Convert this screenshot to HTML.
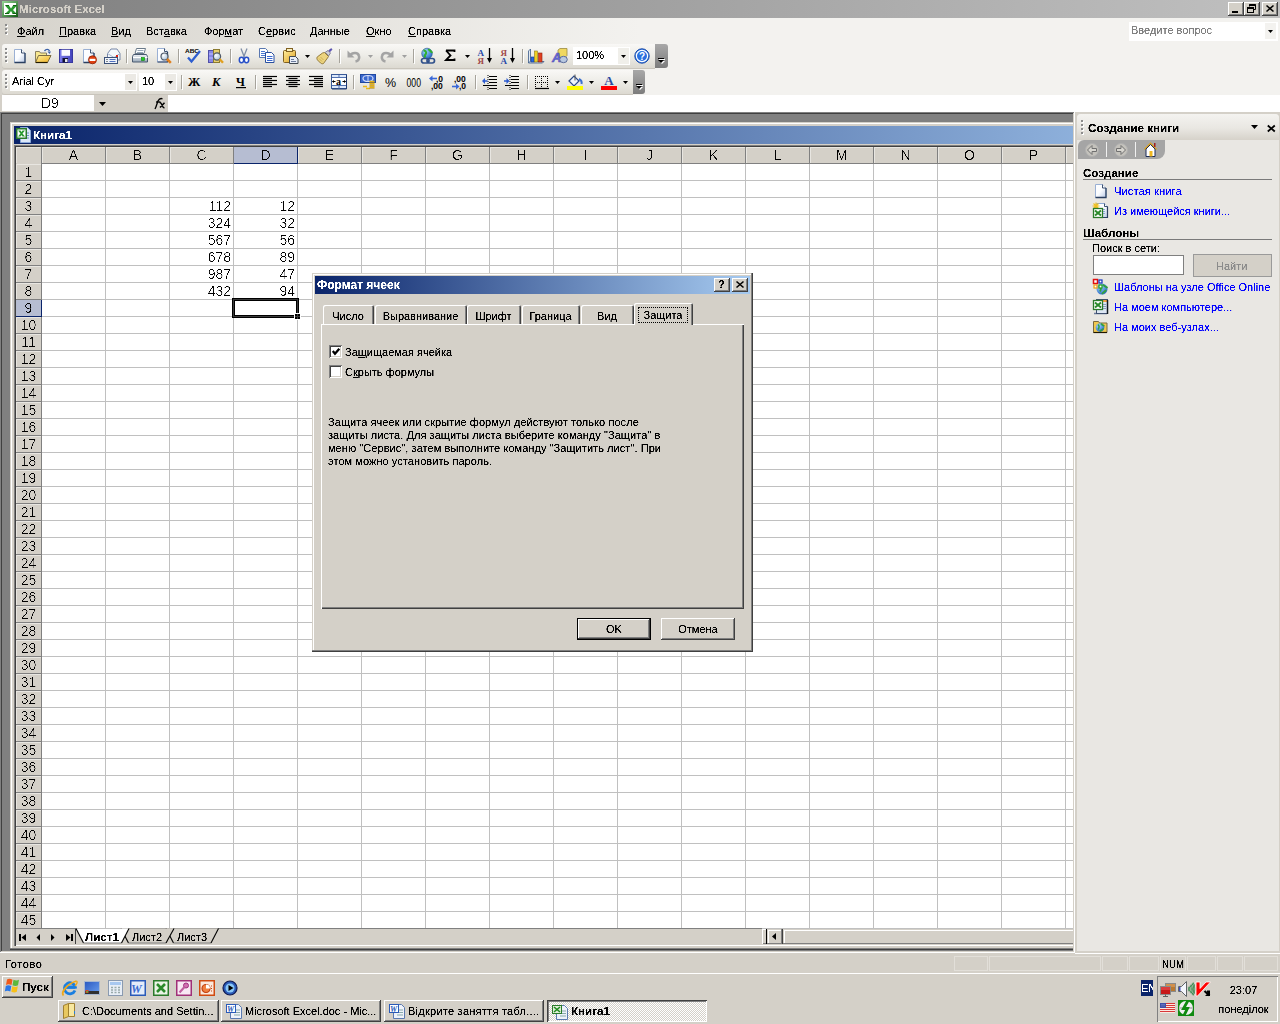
<!DOCTYPE html><html><head><meta charset="utf-8"><style>
*{margin:0;padding:0;box-sizing:border-box}
html,body{width:1280px;height:1024px;overflow:hidden;background:#d4d0c8;font-family:"Liberation Sans",sans-serif;font-size:11px;color:#000;position:relative}
.a{position:absolute}
.t{position:absolute;white-space:pre;line-height:1;filter:url(#c11)}
.raised{box-shadow:inset -1px -1px #404040,inset 1px 1px #fff,inset -2px -2px #808080,inset 2px 2px #d4d0c8;background:#d4d0c8}
.u{text-decoration:underline;text-underline-offset:1px}
svg{position:absolute;overflow:visible}
</style></head><body><div class="a" style="left:0;top:0;width:1280px;height:18px;background:linear-gradient(to right,#808080,#c0c0c0)"></div>
<svg style="left:2px;top:1px" width="16" height="16" viewBox="0 0 16 16"><defs><linearGradient id="gxl" x1="0" y1="0" x2="1" y2="1"><stop offset="0" stop-color="#90d090"/><stop offset="1" stop-color="#1a601a"/></linearGradient></defs><rect x="1" y="1" width="14" height="14" fill="#fff" stroke="url(#gxl)" stroke-width="2"/><path d="M3 4.5h4l2 3 2-3h4l-4 4.5 3.5 3.5h-4L9 10l-2 3H3l4-4z" fill="#2a9a30"/><path d="M3.5 4.5h3.5M3 12.5h4M11 4.5h3.5M10.5 12.5h4" stroke="#106010" stroke-width="1.2"/></svg>
<div class="t" style="filter:url(#cb);left:19px;top:3.18px;font-size:11.6px;font-weight:bold;color:#d4d0c8;">Microsoft Excel</div>
<div class="a raised" style="left:1228px;top:2px;width:16px;height:14px"><div class="a" style="left:4px;top:9px;width:6px;height:2px;background:#000"></div></div>
<div class="a raised" style="left:1244px;top:2px;width:16px;height:14px"><svg style="left:3px;top:2px" width="9" height="9" viewBox="0 0 9 9"><path d="M2.5 2.5V0.5h6v5h-2" fill="none" stroke="#000"/><path d="M2.5 1h6" stroke="#000" stroke-width="2"/><rect x="0.5" y="3.5" width="6" height="5" fill="none" stroke="#000"/><path d="M0.5 4h6" stroke="#000" stroke-width="2"/></svg></div>
<div class="a raised" style="left:1262px;top:2px;width:16px;height:14px"><svg style="left:4px;top:3px" width="8" height="7" viewBox="0 0 8 7"><path d="M0.5 0.5l7 6M7.5 0.5l-7 6" stroke="#000" stroke-width="1.6"/></svg></div>
<div class="a" style="left:0;top:18px;width:1280px;height:77px;background:linear-gradient(to right,#d6d3cc 0px,#f3f2ef 640px,#f3f2ef 1280px)"></div>
<div class="a" style="left:6px;top:25px;width:2px;height:2px;background:#fff"></div><div class="a" style="left:5px;top:24px;width:2px;height:2px;background:#8c8c8c"></div><div class="a" style="left:6px;top:29px;width:2px;height:2px;background:#fff"></div><div class="a" style="left:5px;top:28px;width:2px;height:2px;background:#8c8c8c"></div><div class="a" style="left:6px;top:33px;width:2px;height:2px;background:#fff"></div><div class="a" style="left:5px;top:32px;width:2px;height:2px;background:#8c8c8c"></div>
<div class="t" style="left:17px;top:25.69px;font-size:11px;font-weight:normal;color:#000;"><span class="u">Ф</span>айл</div>
<div class="t" style="left:59px;top:25.69px;font-size:11px;font-weight:normal;color:#000;"><span class="u">П</span>равка</div>
<div class="t" style="left:111px;top:25.69px;font-size:11px;font-weight:normal;color:#000;"><span class="u">В</span>ид</div>
<div class="t" style="left:146px;top:25.69px;font-size:11px;font-weight:normal;color:#000;">Вст<span class="u">а</span>вка</div>
<div class="t" style="left:204px;top:25.69px;font-size:11px;font-weight:normal;color:#000;">Фор<span class="u">м</span>ат</div>
<div class="t" style="left:258px;top:25.69px;font-size:11px;font-weight:normal;color:#000;">С<span class="u">е</span>рвис</div>
<div class="t" style="left:310px;top:25.69px;font-size:11px;font-weight:normal;color:#000;"><span class="u">Д</span>анные</div>
<div class="t" style="left:366px;top:25.69px;font-size:11px;font-weight:normal;color:#000;"><span class="u">О</span>кно</div>
<div class="t" style="left:408px;top:25.69px;font-size:11px;font-weight:normal;color:#000;"><span class="u">С</span>правка</div>
<div class="a" style="left:1129px;top:22px;width:149px;height:19px;background:#fff"></div>
<div class="a" style="left:1265px;top:23px;width:11px;height:16px;background:#f3f2ef"></div>
<svg style="left:1268px;top:30px" width="5" height="3" viewBox="0 0 5 3"><path d="M0 0h5L2.5 3z" fill="#000"/></svg>
<div class="t" style="left:1131px;top:24.69px;font-size:11px;font-weight:normal;color:#808080;">Введите вопрос</div>
<div class="a" style="left:2px;top:44px;width:653px;height:24px;border-radius:3px 0 0 3px;background:linear-gradient(to bottom,#f9f8f6 0%,#eeede8 45%,#dcd9d1 100%);box-shadow:0 1px 0 #c9c5bc"></div>
<div class="a" style="left:655px;top:44px;width:13px;height:24px;border-radius:0 3px 3px 0;background:linear-gradient(to bottom,#a8a8a8,#7c7c7c)"></div><div class="a" style="left:659px;top:59px;width:6px;height:1px;background:#fff"></div><svg style="left:659px;top:61px" width="6" height="3" viewBox="0 0 6 3"><path d="M0 0h6L3 3z" fill="#fff"/></svg><div class="a" style="left:658px;top:58px;width:6px;height:1px;background:#000"></div><svg style="left:658px;top:60px" width="6" height="3" viewBox="0 0 6 3"><path d="M0 0h6L3 3z" fill="#000"/></svg>
<div class="a" style="left:6px;top:49px;width:2px;height:2px;background:#fff"></div><div class="a" style="left:5px;top:48px;width:2px;height:2px;background:#8c8c8c"></div><div class="a" style="left:6px;top:53px;width:2px;height:2px;background:#fff"></div><div class="a" style="left:5px;top:52px;width:2px;height:2px;background:#8c8c8c"></div><div class="a" style="left:6px;top:57px;width:2px;height:2px;background:#fff"></div><div class="a" style="left:5px;top:56px;width:2px;height:2px;background:#8c8c8c"></div><div class="a" style="left:6px;top:61px;width:2px;height:2px;background:#fff"></div><div class="a" style="left:5px;top:60px;width:2px;height:2px;background:#8c8c8c"></div>
<svg width="0" height="0" style="position:absolute"><defs><linearGradient id="gdoc" x1="0" y1="0" x2="1" y2="1"><stop offset="0" stop-color="#fff"/><stop offset="0.5" stop-color="#fafcff"/><stop offset="1" stop-color="#b8c8e4"/></linearGradient><linearGradient id="gfold" x1="0" y1="0" x2="1" y2="1"><stop offset="0" stop-color="#fff2a0"/><stop offset="1" stop-color="#f0b020"/></linearGradient><linearGradient id="gsave" x1="0" y1="0" x2="1" y2="0"><stop offset="0" stop-color="#8080f0"/><stop offset="1" stop-color="#4040b8"/></linearGradient><linearGradient id="gprn" x1="0" y1="0" x2="0" y2="1"><stop offset="0" stop-color="#f0f4f8"/><stop offset="1" stop-color="#98a8b8"/></linearGradient><linearGradient id="gclip" x1="0" y1="0" x2="1" y2="1"><stop offset="0" stop-color="#fff0a0"/><stop offset="1" stop-color="#e0a020"/></linearGradient><radialGradient id="gglobe" cx="0.35" cy="0.3" r="0.8"><stop offset="0" stop-color="#a0d8ff"/><stop offset="1" stop-color="#2060c0"/></radialGradient><radialGradient id="glens" cx="0.35" cy="0.35" r="0.7"><stop offset="0" stop-color="#fff"/><stop offset="1" stop-color="#a8c0d8"/></radialGradient></defs></svg>
<svg width="0" height="0" style="position:absolute"><filter id="c11" x="-0.1" y="-0.6" width="1.2" height="2.2"><feComponentTransfer><feFuncA type="linear" slope="3" intercept="-0.7"/></feComponentTransfer></filter><filter id="c13" x="-0.1" y="-0.6" width="1.2" height="2.2"><feComponentTransfer><feFuncA type="linear" slope="5" intercept="-2.75"/></feComponentTransfer></filter><filter id="cb" x="-0.1" y="-0.6" width="1.2" height="2.2"><feComponentTransfer><feFuncA type="linear" slope="3" intercept="-0.8"/></feComponentTransfer></filter></svg>
<svg style="left:11px;top:48px" width="16" height="16" viewBox="0 0 16 16"><path d="M3.5 1.5h7l3.5 3.5v9.5h-10.5z" fill="url(#gdoc)" stroke="#9ab0d4"/><path d="M14 5v9.5h-10.5" fill="none" stroke="#2a3f60" stroke-width="1.3"/><path d="M10.5 1.5v3.5h3.5" fill="#fff" stroke="#2a3f60" stroke-width="0.9"/></svg>
<svg style="left:35px;top:48px" width="16" height="16" viewBox="0 0 16 16"><path d="M9.5 3c1.5-2 4-2.2 5 0" fill="none" stroke="#3a60a8" stroke-width="1.4"/><path d="M12.5 3.5h3.5l-1.5 2.5z" fill="#3a60a8"/><path d="M0.5 3.5h4l1 1.5h6v9.5h-11z" fill="#f8e890" stroke="#8a8060"/><path d="M0.5 14.5l3-7h12.5l-3.5 7z" fill="url(#gfold)" stroke="#7a6a40"/><path d="M1 14.5h11.5" stroke="#201800" stroke-width="1.2"/></svg>
<svg style="left:58px;top:48px" width="16" height="16" viewBox="0 0 16 16"><rect x="1" y="1" width="14" height="14" fill="url(#gsave)"/><rect x="1.5" y="1.5" width="13" height="13" fill="none" stroke="#3838a0"/><rect x="3.5" y="1.8" width="8.5" height="6" fill="#fafaff"/><rect x="4.5" y="10" width="5.5" height="4.5" fill="#101030"/><rect x="7" y="11" width="2.5" height="3" fill="#e8e8f0"/></svg>
<svg style="left:81px;top:48px" width="16" height="16" viewBox="0 0 16 16"><path d="M2.5 1.5h7l3.5 3.5v9.5h-10.5z" fill="url(#gdoc)" stroke="#9ab0d4"/><path d="M13 5v9.5h-10.5" fill="none" stroke="#2a3f60" stroke-width="1.3"/><path d="M9.5 1.5v3.5h3.5" fill="#fff" stroke="#2a3f60" stroke-width="0.9"/><circle cx="11.5" cy="11.8" r="4" fill="#e04010" stroke="#902000" stroke-width="0.8"/><rect x="8.6" y="10.8" width="5.8" height="2.2" fill="#fff"/></svg>
<svg style="left:104px;top:48px" width="16" height="16" viewBox="0 0 16 16"><path d="M3.5 5.5l3.5-4.5h6l3 4.5v6.5h-12.5z" fill="#f4f8fc" stroke="#7888a8"/><path d="M3.5 5.5l6.5 4 6-4" fill="none" stroke="#a8b8d0"/><rect x="12" y="7" width="2" height="2" fill="#e02010"/><rect x="0.5" y="9.5" width="13" height="6" fill="#f0f4fa" stroke="#3a5078"/><path d="M2 11.5h2M2 13.5h2" stroke="#808890"/><path d="M5.5 11.5h6M5.5 13.5h6" stroke="#5070c0"/></svg>
<div class="a" style="left:126px;top:49px;width:1px;height:14px;background:#a6a39b"></div><div class="a" style="left:127px;top:50px;width:1px;height:14px;background:#fff"></div>
<svg style="left:132px;top:48px" width="16" height="16" viewBox="0 0 16 16"><path d="M4.5 0.5h9l-1.5 5h-9z" fill="#fff" stroke="#6a7a8a"/><path d="M5.5 2.5h6M5 4.5h6" stroke="#98a8b8"/><path d="M1.5 6.5h13l1 2v5.5h-15v-5.5z" fill="url(#gprn)" stroke="#4a5a70"/><path d="M1 9.5h14.5" stroke="#fff"/><rect x="9.5" y="9.5" width="3" height="3" fill="#20d020" stroke="#108010" stroke-width="0.6"/></svg>
<svg style="left:157px;top:48px" width="16" height="16" viewBox="0 0 16 16"><path d="M0.5 0.5h7l3 3v10.5h-10z" fill="url(#gdoc)" stroke="#9ab0d4"/><path d="M10.5 4v10h-10" fill="none" stroke="#2a3f60" stroke-width="1.2"/><path d="M7.5 0.5v3h3" fill="#fff" stroke="#2a3f60" stroke-width="0.9"/><circle cx="7.5" cy="8.5" r="3.5" fill="url(#glens)" stroke="#505a68" stroke-width="1.2"/><path d="M10 11l3.8 3.8" stroke="#e08020" stroke-width="2.6"/></svg>
<div class="a" style="left:178px;top:49px;width:1px;height:14px;background:#a6a39b"></div><div class="a" style="left:179px;top:50px;width:1px;height:14px;background:#fff"></div>
<svg style="left:185px;top:48px" width="16" height="16" viewBox="0 0 16 16"><text x="0" y="5" font-family="Liberation Sans" font-size="6.2" font-weight="bold" fill="#000" textLength="14" lengthAdjust="spacingAndGlyphs">ABC</text><path d="M3 9.5l3.5 4L15 3" fill="none" stroke="#2e5ed0" stroke-width="2.3"/></svg>
<svg style="left:208px;top:48px" width="16" height="16" viewBox="0 0 16 16"><rect x="0.5" y="2.5" width="5" height="12" fill="#8888e8" stroke="#5050a8"/><path d="M1 6h4M1 10h4" stroke="#c0c0ff"/><rect x="5.5" y="1.5" width="6" height="13" fill="#e8d070" stroke="#8a7a30"/><circle cx="9" cy="8.5" r="3.6" fill="url(#glens)" stroke="#505a68" stroke-width="1.2"/><path d="M11.5 11l3.5 3.8" stroke="#e0a020" stroke-width="2.4"/></svg>
<div class="a" style="left:230px;top:49px;width:1px;height:14px;background:#a6a39b"></div><div class="a" style="left:231px;top:50px;width:1px;height:14px;background:#fff"></div>
<svg style="left:236px;top:48px" width="16" height="16" viewBox="0 0 16 16"><path d="M5 0.5l3.5 9M11 0.5L7.5 9.5" stroke="#8090a8" stroke-width="1.3"/><ellipse cx="5.5" cy="12" rx="2.2" ry="2.7" fill="#fff" stroke="#2850c8" stroke-width="1.5"/><ellipse cx="10.5" cy="12" rx="2.2" ry="2.7" fill="#fff" stroke="#2850c8" stroke-width="1.5"/></svg>
<svg style="left:259px;top:48px" width="16" height="16" viewBox="0 0 16 16"><path d="M0.5 0.5h6l2 2v7h-8z" fill="#fff" stroke="#5a78b0"/><path d="M2 3.5h4M2 5.5h5M2 7.5h5" stroke="#4a78d0"/><path d="M6.5 4.5h6l2.5 2.5v7.5h-8.5z" fill="#fff" stroke="#2a50a0"/><path d="M8 8.5h5.5M8 10.5h5.5M8 12.5h5.5" stroke="#3a68d0"/></svg>
<svg style="left:283px;top:48px" width="16" height="16" viewBox="0 0 16 16"><rect x="0.5" y="2.5" width="12" height="12" rx="1" fill="url(#gclip)" stroke="#806020"/><rect x="3.5" y="0.5" width="6" height="3" fill="#f8f0c0" stroke="#806020"/><path d="M6.5 8.5h6l2.5 2.5v4.5h-8.5z" fill="#e8eef8" stroke="#404850"/><path d="M8 11.5h3M8 13.5h5" stroke="#6a7a9a"/></svg>
<svg style="left:305px;top:55px" width="5" height="3" viewBox="0 0 5 3"><path d="M0 0h5L2.5 3z" fill="#000"/></svg>
<svg style="left:317px;top:48px" width="16" height="16" viewBox="0 0 16 16"><path d="M11 3.5l2.5-2.5c0.8-0.8 1.8 0.2 1 1L12 4.5z" fill="#6a60d8" stroke="#383090" stroke-width="0.8"/><path d="M8 4.5l3-2 2.5 2.5-2 3z" fill="#d0d0d8" stroke="#707088" stroke-width="0.8"/><path d="M9 5l2 2" stroke="#909098"/><path d="M7.5 4.5l4 4-1 1.5-4 5.5c-1 0.5-2 0.3-3-0.5L0.5 12c-0.7-1-0.8-2-0.3-3l5.3-4z" fill="#ecd480" stroke="#8a7030" stroke-width="0.9"/><path d="M2 10.5l3 3M3.5 9l3 3" stroke="#c0a040" stroke-width="0.7"/></svg>
<div class="a" style="left:339px;top:49px;width:1px;height:14px;background:#a6a39b"></div><div class="a" style="left:340px;top:50px;width:1px;height:14px;background:#fff"></div>
<svg style="left:347px;top:48px" width="16" height="16" viewBox="0 0 16 16"><path d="M3 7.5c2-3 8-4 9 0.5 0.8 3-1 5-3.5 5.5" fill="none" stroke="#a4a4a4" stroke-width="2.6"/><path d="M0.5 2.5v7h7z" fill="#a4a4a4"/></svg>
<svg style="left:368px;top:55px" width="5" height="3" viewBox="0 0 5 3"><path d="M0 0h5L2.5 3z" fill="#a0a0a0"/></svg>
<svg style="left:378px;top:48px" width="16" height="16" viewBox="0 0 16 16"><path d="M13 7.5c-2-3-8-4-9 0.5-0.8 3 1 5 3.5 5.5" fill="none" stroke="#a4a4a4" stroke-width="2.6"/><path d="M15.5 2.5v7h-7z" fill="#a4a4a4"/></svg>
<svg style="left:402px;top:55px" width="5" height="3" viewBox="0 0 5 3"><path d="M0 0h5L2.5 3z" fill="#a0a0a0"/></svg>
<div class="a" style="left:413px;top:49px;width:1px;height:14px;background:#a6a39b"></div><div class="a" style="left:414px;top:50px;width:1px;height:14px;background:#fff"></div>
<svg style="left:420px;top:48px" width="16" height="16" viewBox="0 0 16 16"><circle cx="7" cy="5.5" r="5.3" fill="url(#gglobe)" stroke="#20508a" stroke-width="0.6"/><path d="M3.5 2.5c2 0 3 1.5 2.5 3s-2.5 2-0.5 4M8.5 1c0.5 1.5 3 2 3.5 4" stroke="#30b030" stroke-width="2" fill="none"/><rect x="1.5" y="10.5" width="7.5" height="4.5" rx="2.2" fill="none" stroke="#30508a" stroke-width="1.7"/><rect x="7" y="10.5" width="7.5" height="4.5" rx="2.2" fill="none" stroke="#30508a" stroke-width="1.7"/></svg>
<svg style="left:443px;top:48px" width="16" height="16" viewBox="0 0 16 16"><path d="M3 2.5h8.5v1.5M3 2.5l4.5 5-4.5 4.5h8.5v-1.5" fill="none" stroke="#000" stroke-width="1.8"/></svg>
<svg style="left:465px;top:55px" width="5" height="3" viewBox="0 0 5 3"><path d="M0 0h5L2.5 3z" fill="#000"/></svg>
<svg style="left:477px;top:48px" width="16" height="16" viewBox="0 0 16 16"><text x="0.5" y="7.5" font-family="Liberation Serif" font-size="9" font-weight="bold" fill="#2848a8">А</text><text x="0.5" y="15.5" font-family="Liberation Serif" font-size="9" font-weight="bold" fill="#a04848">Я</text><path d="M12.5 0v13" stroke="#000" stroke-width="1.3"/><path d="M10 10l2.5 5 2.5-5z" fill="#000"/></svg>
<svg style="left:500px;top:48px" width="16" height="16" viewBox="0 0 16 16"><text x="0.5" y="7.5" font-family="Liberation Serif" font-size="9" font-weight="bold" fill="#a04848">Я</text><text x="0.5" y="15.5" font-family="Liberation Serif" font-size="9" font-weight="bold" fill="#2848a8">А</text><path d="M12.5 0v13" stroke="#000" stroke-width="1.3"/><path d="M10 10l2.5 5 2.5-5z" fill="#000"/></svg>
<div class="a" style="left:522px;top:49px;width:1px;height:14px;background:#a6a39b"></div><div class="a" style="left:523px;top:50px;width:1px;height:14px;background:#fff"></div>
<svg style="left:528px;top:48px" width="16" height="16" viewBox="0 0 16 16"><path d="M0.5 3l2-2v12l-2 2zM0.5 15h14l1.5-1.5H2.5" fill="#e0e8f0" stroke="#3a5a8a" stroke-width="0.8"/><rect x="3" y="9" width="3" height="5" fill="#2a6ae0" stroke="#1a3a8a" stroke-width="0.6"/><rect x="6.5" y="3" width="3" height="11" fill="#f0d020" stroke="#8a7a20" stroke-width="0.6"/><rect x="10.5" y="5" width="3.5" height="9" fill="#e04020" stroke="#902010" stroke-width="0.6"/></svg>
<svg style="left:552px;top:48px" width="16" height="16" viewBox="0 0 16 16"><path d="M6 2l2-1.5h7v7l-2 2H6z" fill="#f0d860" stroke="#9a8a40" stroke-width="0.8"/><text x="0" y="13.5" font-family="Liberation Sans" font-style="italic" font-weight="bold" font-size="13" fill="#6a6ae0" stroke="#4848a8" stroke-width="0.5">A</text><ellipse cx="11.5" cy="11.5" rx="3.8" ry="3.2" fill="#b8c8e0" stroke="#5a6a9a"/></svg>
<div class="a" style="left:573px;top:47px;width:57px;height:18px;background:#fff"></div>
<div class="a" style="left:618px;top:48px;width:11px;height:16px;background:#f0efea"></div>
<svg style="left:621px;top:55px" width="5" height="3" viewBox="0 0 5 3"><path d="M0 0h5L2.5 3z" fill="#000"/></svg>
<div class="t" style="left:576px;top:49.69px;font-size:11px;font-weight:normal;color:#000;">100%</div>
<svg style="left:634px;top:48px" width="16" height="16" viewBox="0 0 16 16"><circle cx="8" cy="8" r="7.2" fill="#2a70e0" stroke="#1a4aa8"/><circle cx="8" cy="8" r="5.6" fill="none" stroke="#fff" stroke-width="1.2"/><text x="8" y="12" text-anchor="middle" font-family="Liberation Sans" font-weight="bold" font-size="10" fill="#fff">?</text></svg>
<div class="a" style="left:2px;top:70px;width:631px;height:24px;border-radius:3px 0 0 3px;background:linear-gradient(to bottom,#f9f8f6 0%,#eeede8 45%,#dcd9d1 100%);box-shadow:0 1px 0 #c9c5bc"></div>
<div class="a" style="left:633px;top:70px;width:12px;height:24px;border-radius:0 3px 3px 0;background:linear-gradient(to bottom,#a8a8a8,#7c7c7c)"></div><div class="a" style="left:637px;top:85px;width:6px;height:1px;background:#fff"></div><svg style="left:637px;top:87px" width="6" height="3" viewBox="0 0 6 3"><path d="M0 0h6L3 3z" fill="#fff"/></svg><div class="a" style="left:636px;top:84px;width:6px;height:1px;background:#000"></div><svg style="left:636px;top:86px" width="6" height="3" viewBox="0 0 6 3"><path d="M0 0h6L3 3z" fill="#000"/></svg>
<div class="a" style="left:6px;top:75px;width:2px;height:2px;background:#fff"></div><div class="a" style="left:5px;top:74px;width:2px;height:2px;background:#8c8c8c"></div><div class="a" style="left:6px;top:79px;width:2px;height:2px;background:#fff"></div><div class="a" style="left:5px;top:78px;width:2px;height:2px;background:#8c8c8c"></div><div class="a" style="left:6px;top:83px;width:2px;height:2px;background:#fff"></div><div class="a" style="left:5px;top:82px;width:2px;height:2px;background:#8c8c8c"></div><div class="a" style="left:6px;top:87px;width:2px;height:2px;background:#fff"></div><div class="a" style="left:5px;top:86px;width:2px;height:2px;background:#8c8c8c"></div>
<div class="a" style="left:10px;top:73px;width:127px;height:18px;background:#fff"></div>
<div class="a" style="left:125px;top:74px;width:11px;height:16px;background:#ebe9e4"></div>
<svg style="left:128px;top:81px" width="5" height="3" viewBox="0 0 5 3"><path d="M0 0h5L2.5 3z" fill="#000"/></svg>
<div class="t" style="left:12px;top:75.69px;font-size:11px;font-weight:normal;color:#000;">Arial Cyr</div>
<div class="a" style="left:139px;top:73px;width:38px;height:18px;background:#fff"></div>
<div class="a" style="left:165px;top:74px;width:11px;height:16px;background:#ebe9e4"></div>
<svg style="left:168px;top:81px" width="5" height="3" viewBox="0 0 5 3"><path d="M0 0h5L2.5 3z" fill="#000"/></svg>
<div class="t" style="left:142px;top:75.69px;font-size:11px;font-weight:normal;color:#000;">10</div>
<div class="a" style="left:181px;top:75px;width:1px;height:14px;background:#a6a39b"></div><div class="a" style="left:182px;top:76px;width:1px;height:14px;background:#fff"></div>
<svg style="left:187px;top:74px" width="16" height="16" viewBox="0 0 16 16"><text x="1" y="12" font-family="Liberation Serif" font-weight="bold" font-size="12.5" fill="#000">Ж</text></svg>
<svg style="left:210px;top:74px" width="16" height="16" viewBox="0 0 16 16"><text x="2" y="12" font-family="Liberation Serif" font-style="italic" font-weight="bold" font-size="12.5" fill="#000">К</text></svg>
<svg style="left:233px;top:74px" width="16" height="16" viewBox="0 0 16 16"><text x="3" y="12" font-family="Liberation Serif" font-weight="bold" font-size="12" fill="#000">Ч</text><rect x="3" y="13" width="10" height="1.2" fill="#000"/></svg>
<div class="a" style="left:255px;top:75px;width:1px;height:14px;background:#a6a39b"></div><div class="a" style="left:256px;top:76px;width:1px;height:14px;background:#fff"></div>
<svg style="left:262px;top:74px" width="16" height="16" viewBox="0 0 16 16"><path d="M1 2.5H15" stroke="#000" stroke-width="1.2"/><path d="M1 4.5H10" stroke="#000" stroke-width="1.2"/><path d="M1 6.5H15" stroke="#000" stroke-width="1.2"/><path d="M1 8.5H10" stroke="#000" stroke-width="1.2"/><path d="M1 10.5H15" stroke="#000" stroke-width="1.2"/><path d="M1 12.5H10" stroke="#000" stroke-width="1.2"/></svg>
<svg style="left:285px;top:74px" width="16" height="16" viewBox="0 0 16 16"><path d="M1 2.5H15" stroke="#000" stroke-width="1.2"/><path d="M3.5 4.5H12.5" stroke="#000" stroke-width="1.2"/><path d="M1 6.5H15" stroke="#000" stroke-width="1.2"/><path d="M3.5 8.5H12.5" stroke="#000" stroke-width="1.2"/><path d="M1 10.5H15" stroke="#000" stroke-width="1.2"/><path d="M3.5 12.5H12.5" stroke="#000" stroke-width="1.2"/></svg>
<svg style="left:308px;top:74px" width="16" height="16" viewBox="0 0 16 16"><path d="M1 2.5H15" stroke="#000" stroke-width="1.2"/><path d="M6 4.5H15" stroke="#000" stroke-width="1.2"/><path d="M1 6.5H15" stroke="#000" stroke-width="1.2"/><path d="M6 8.5H15" stroke="#000" stroke-width="1.2"/><path d="M1 10.5H15" stroke="#000" stroke-width="1.2"/><path d="M6 12.5H15" stroke="#000" stroke-width="1.2"/></svg>
<svg style="left:331px;top:74px" width="16" height="16" viewBox="0 0 16 16"><rect x="0.5" y="0.5" width="15" height="14" fill="#dce8fa" stroke="#3a5a98"/><path d="M15.5 1v14H1" fill="none" stroke="#203a70"/><path d="M1 3.5h14M1 11.5h14M8 1v2.5M8 11.5v3" stroke="#5070b0"/><rect x="1" y="4" width="14" height="7" fill="#fff"/><text x="5" y="10.5" font-family="Liberation Serif" font-weight="bold" font-size="10" fill="#000">a</text><path d="M1.5 7.5h3M11.5 7.5h3" stroke="#000"/><path d="M1 7.5l2-1.5v3zM15 7.5l-2-1.5v3z" fill="#000"/></svg>
<div class="a" style="left:353px;top:75px;width:1px;height:14px;background:#a6a39b"></div><div class="a" style="left:354px;top:76px;width:1px;height:14px;background:#fff"></div>
<svg style="left:360px;top:74px" width="16" height="16" viewBox="0 0 16 16"><rect x="0" y="0" width="16" height="9" fill="#3a68d0"/><rect x="0.5" y="0.5" width="15" height="8" fill="none" stroke="#2048a0"/><ellipse cx="8" cy="4.5" rx="5" ry="3" fill="none" stroke="#d8e0f8" stroke-width="1.2"/><path d="M8 1.5v6" stroke="#d8e0f8"/><path d="M9.5 7.5h5M9.5 9.5h5M9.5 11.5h5M9.5 13.5h5M3 12.5h4M6 14.5h4" stroke="#e8b818" stroke-width="1.6"/><path d="M9.5 8.3h5M9.5 10.3h5M9.5 12.3h5M9.5 14.3h5" stroke="#a07010" stroke-width="0.5"/></svg>
<svg style="left:382px;top:74px" width="16" height="16" viewBox="0 0 16 16"><text x="3" y="12.8" font-family="Liberation Sans" font-size="12.5" fill="#000">%</text></svg>
<svg style="left:405px;top:74px" width="16" height="16" viewBox="0 0 16 16"><text x="1.5" y="12.8" font-family="Liberation Sans" font-size="12" fill="#000" textLength="14.5" lengthAdjust="spacingAndGlyphs">000</text></svg>
<svg style="left:429px;top:74px" width="16" height="16" viewBox="0 0 16 16"><path d="M2 4.5h6" stroke="#3a68d8" stroke-width="1.6"/><path d="M0 4.5l3.5-3v6z" fill="#3a68d8"/><text x="7" y="7.5" font-family="Liberation Sans" font-weight="bold" font-size="8.5" fill="#000">,0</text><text x="2" y="15" font-family="Liberation Sans" font-weight="bold" font-size="8.5" fill="#000">,00</text></svg>
<svg style="left:452px;top:74px" width="16" height="16" viewBox="0 0 16 16"><text x="2" y="7.5" font-family="Liberation Sans" font-weight="bold" font-size="8.5" fill="#000">,00</text><path d="M0 12.5h6" stroke="#3a68d8" stroke-width="1.6"/><path d="M7.5 12.5l-3.5-3v6z" fill="#3a68d8"/><text x="7" y="15" font-family="Liberation Sans" font-weight="bold" font-size="8.5" fill="#000">,0</text></svg>
<div class="a" style="left:475px;top:75px;width:1px;height:14px;background:#a6a39b"></div><div class="a" style="left:476px;top:76px;width:1px;height:14px;background:#fff"></div>
<svg style="left:482px;top:74px" width="16" height="16" viewBox="0 0 16 16"><path d="M7 2.5h8M7 5.5h8M7 8.5h8M1 11.5h14M7 14.5h8" stroke="#000" stroke-width="1.2"/><path d="M6 1v15" stroke="#000" stroke-dasharray="1 1"/><path d="M2.5 7h3" stroke="#2a5ad0" stroke-width="1.5"/><path d="M0 7l3-3v6z" fill="#2a5ad0"/></svg>
<svg style="left:504px;top:74px" width="16" height="16" viewBox="0 0 16 16"><path d="M7 2.5h8M7 5.5h8M7 8.5h8M1 11.5h14M7 14.5h8" stroke="#000" stroke-width="1.2"/><path d="M6 1v15" stroke="#000" stroke-dasharray="1 1"/><path d="M0 7h3" stroke="#2a5ad0" stroke-width="1.5"/><path d="M5.5 7l-3-3v6z" fill="#2a5ad0"/></svg>
<div class="a" style="left:527px;top:75px;width:1px;height:14px;background:#a6a39b"></div><div class="a" style="left:528px;top:76px;width:1px;height:14px;background:#fff"></div>
<svg style="left:534px;top:74px" width="16" height="16" viewBox="0 0 16 16"><path d="M1 2.5h13M1 8.5h13M1.5 2v12M7.5 2v12M13.5 2v12" stroke="#000" stroke-dasharray="1 1"/><path d="M1 14.5h14" stroke="#000" stroke-width="1.2"/></svg>
<svg style="left:555px;top:81px" width="5" height="3" viewBox="0 0 5 3"><path d="M0 0h5L2.5 3z" fill="#000"/></svg>
<svg style="left:567px;top:74px" width="16" height="16" viewBox="0 0 16 16"><path d="M2 7l5-5 5 5-5 5z" fill="#eef4fc" stroke="#2a4a8a" stroke-width="1.2"/><path d="M8 0.5v6" stroke="#555"/><path d="M12 5c2 1 3 3 2.5 5" fill="none" stroke="#3a70d0" stroke-width="2"/><rect x="0" y="12" width="16" height="4" fill="#ffff00"/></svg>
<svg style="left:589px;top:81px" width="5" height="3" viewBox="0 0 5 3"><path d="M0 0h5L2.5 3z" fill="#000"/></svg>
<svg style="left:601px;top:74px" width="16" height="16" viewBox="0 0 16 16"><text x="8" y="11" text-anchor="middle" font-family="Liberation Serif" font-weight="bold" font-size="13" fill="#2a4aa0">A</text><rect x="0" y="12" width="16" height="4" fill="#ff0000"/></svg>
<svg style="left:623px;top:81px" width="5" height="3" viewBox="0 0 5 3"><path d="M0 0h5L2.5 3z" fill="#000"/></svg>
<div class="a" style="left:0;top:95px;width:1280px;height:17px;background:#d4d0c8"></div>
<div class="a" style="left:2px;top:95px;width:92px;height:16px;background:#fff"></div>
<div class="t" style="filter:url(#c13);left:41px;top:96.15px;font-size:14px;font-weight:normal;color:#000;">D9</div>
<svg style="left:99px;top:102px" width="7" height="4" viewBox="0 0 7 4"><path d="M0 0h7L3.5 4z" fill="#000"/></svg>
<svg style="left:154px;top:96px" width="12" height="14" viewBox="0 0 12 14"><path d="M1 13C2.5 10.5 3 7 4 5S6 2 8.5 2.8" fill="none" stroke="#000" stroke-width="1.4"/><path d="M2 6h4.5" stroke="#000" stroke-width="1.3"/><path d="M5.5 6.5c1 0 1.5 0.5 2 1.5l1.5 3c0.3 0.6 0.8 0.8 1.5 0.6M10.5 6.8L6 11.5" fill="none" stroke="#000" stroke-width="1.5"/></svg>
<div class="a" style="left:168px;top:95px;width:1112px;height:17px;background:#fff"></div>
<div class="a" style="left:0;top:112px;width:1075px;height:841px;background:#808080"></div>
<div class="a" style="left:0;top:0;width:1073px;height:951px;overflow:hidden">
<div class="a" style="left:10px;top:122px;width:1270px;height:828px;background:#d4d0c8;box-shadow:inset -1px -1px #404040,inset -2px -2px #808080,inset 1px 1px #d4d0c8,inset 2px 2px #fff"></div>
<div class="a" style="left:14px;top:126px;width:1259px;height:18px;background:linear-gradient(to right,#0a246a,#a6caf0)"></div>
<svg style="left:16px;top:127px" width="16" height="16" viewBox="0 0 16 16"><path d="M4.5 0.5h7l3 3v12h-10z" fill="#dce8f8" stroke="#8aa8d8"/><path d="M9 6h4M9 8.5h4M9 11h4" stroke="#6a90c8"/><rect x="0.75" y="1.75" width="9.5" height="9.5" fill="#fff" stroke="#2a7a2a" stroke-width="1.5"/><path d="M2 3.5h2.5l1 1.5 1-1.5H9L6.5 6.5 9 9.5H6.5l-1-1.5-1 1.5H2l2.5-3z" fill="#2a9a30"/></svg>
<div class="t" style="filter:url(#cb);left:33px;top:129.18px;font-size:11.6px;font-weight:bold;color:#fff;">Книга1</div>
<div class="a" style="left:14px;top:145px;width:1270px;height:801px;box-shadow:inset 1px 1px #808080,inset 2px 2px #404040,inset -1px -1px #fff,inset -2px -2px #d4d0c8"></div>
<div class="a" style="left:16px;top:147px;width:1060px;height:782px;background:#fff"></div>
<div class="a" style="left:42px;top:164px;width:1040px;height:765px;background-image:linear-gradient(to right,transparent 63px,#c0c0c0 63px),linear-gradient(to bottom,transparent 16px,#c0c0c0 16px);background-size:64px 17px,64px 17px"></div>
<div class="a" style="left:16px;top:147px;width:1060px;height:16px;background:#d4d0c8"></div>
<div class="a" style="left:16px;top:163px;width:1060px;height:1px;background:#808080"></div>
<div class="a" style="left:16px;top:147px;width:25px;height:782px;background:#d4d0c8"></div>
<div class="a" style="left:41px;top:147px;width:1px;height:782px;background:#808080"></div>
<div class="a" style="left:42px;top:147px;width:63px;height:1px;background:#e8e6e1"></div>
<div class="a" style="left:42px;top:147px;width:1px;height:16px;background:#e8e6e1"></div>
<div class="a" style="left:105px;top:147px;width:1px;height:16px;background:#808080"></div>
<div class="t" style="filter:url(#c13);left:42px;width:63px;text-align:center;top:148.15px;font-size:14px">A</div>
<div class="a" style="left:106px;top:147px;width:63px;height:1px;background:#e8e6e1"></div>
<div class="a" style="left:106px;top:147px;width:1px;height:16px;background:#e8e6e1"></div>
<div class="a" style="left:169px;top:147px;width:1px;height:16px;background:#808080"></div>
<div class="t" style="filter:url(#c13);left:106px;width:63px;text-align:center;top:148.15px;font-size:14px">B</div>
<div class="a" style="left:170px;top:147px;width:63px;height:1px;background:#e8e6e1"></div>
<div class="a" style="left:170px;top:147px;width:1px;height:16px;background:#e8e6e1"></div>
<div class="a" style="left:233px;top:147px;width:1px;height:16px;background:#808080"></div>
<div class="t" style="filter:url(#c13);left:170px;width:63px;text-align:center;top:148.15px;font-size:14px">C</div>
<div class="a" style="left:234px;top:147px;width:63px;height:16px;background:#b6bdd2"></div>
<div class="a" style="left:234px;top:163px;width:64px;height:1px;background:#0a246a"></div>
<div class="a" style="left:297px;top:147px;width:1px;height:17px;background:#0a246a"></div>
<div class="t" style="filter:url(#c13);left:234px;width:63px;text-align:center;top:148.15px;font-size:14px">D</div>
<div class="a" style="left:298px;top:147px;width:63px;height:1px;background:#e8e6e1"></div>
<div class="a" style="left:298px;top:147px;width:1px;height:16px;background:#e8e6e1"></div>
<div class="a" style="left:361px;top:147px;width:1px;height:16px;background:#808080"></div>
<div class="t" style="filter:url(#c13);left:298px;width:63px;text-align:center;top:148.15px;font-size:14px">E</div>
<div class="a" style="left:362px;top:147px;width:63px;height:1px;background:#e8e6e1"></div>
<div class="a" style="left:362px;top:147px;width:1px;height:16px;background:#e8e6e1"></div>
<div class="a" style="left:425px;top:147px;width:1px;height:16px;background:#808080"></div>
<div class="t" style="filter:url(#c13);left:362px;width:63px;text-align:center;top:148.15px;font-size:14px">F</div>
<div class="a" style="left:426px;top:147px;width:63px;height:1px;background:#e8e6e1"></div>
<div class="a" style="left:426px;top:147px;width:1px;height:16px;background:#e8e6e1"></div>
<div class="a" style="left:489px;top:147px;width:1px;height:16px;background:#808080"></div>
<div class="t" style="filter:url(#c13);left:426px;width:63px;text-align:center;top:148.15px;font-size:14px">G</div>
<div class="a" style="left:490px;top:147px;width:63px;height:1px;background:#e8e6e1"></div>
<div class="a" style="left:490px;top:147px;width:1px;height:16px;background:#e8e6e1"></div>
<div class="a" style="left:553px;top:147px;width:1px;height:16px;background:#808080"></div>
<div class="t" style="filter:url(#c13);left:490px;width:63px;text-align:center;top:148.15px;font-size:14px">H</div>
<div class="a" style="left:554px;top:147px;width:63px;height:1px;background:#e8e6e1"></div>
<div class="a" style="left:554px;top:147px;width:1px;height:16px;background:#e8e6e1"></div>
<div class="a" style="left:617px;top:147px;width:1px;height:16px;background:#808080"></div>
<div class="t" style="filter:url(#c13);left:554px;width:63px;text-align:center;top:148.15px;font-size:14px">I</div>
<div class="a" style="left:618px;top:147px;width:63px;height:1px;background:#e8e6e1"></div>
<div class="a" style="left:618px;top:147px;width:1px;height:16px;background:#e8e6e1"></div>
<div class="a" style="left:681px;top:147px;width:1px;height:16px;background:#808080"></div>
<div class="t" style="filter:url(#c13);left:618px;width:63px;text-align:center;top:148.15px;font-size:14px">J</div>
<div class="a" style="left:682px;top:147px;width:63px;height:1px;background:#e8e6e1"></div>
<div class="a" style="left:682px;top:147px;width:1px;height:16px;background:#e8e6e1"></div>
<div class="a" style="left:745px;top:147px;width:1px;height:16px;background:#808080"></div>
<div class="t" style="filter:url(#c13);left:682px;width:63px;text-align:center;top:148.15px;font-size:14px">K</div>
<div class="a" style="left:746px;top:147px;width:63px;height:1px;background:#e8e6e1"></div>
<div class="a" style="left:746px;top:147px;width:1px;height:16px;background:#e8e6e1"></div>
<div class="a" style="left:809px;top:147px;width:1px;height:16px;background:#808080"></div>
<div class="t" style="filter:url(#c13);left:746px;width:63px;text-align:center;top:148.15px;font-size:14px">L</div>
<div class="a" style="left:810px;top:147px;width:63px;height:1px;background:#e8e6e1"></div>
<div class="a" style="left:810px;top:147px;width:1px;height:16px;background:#e8e6e1"></div>
<div class="a" style="left:873px;top:147px;width:1px;height:16px;background:#808080"></div>
<div class="t" style="filter:url(#c13);left:810px;width:63px;text-align:center;top:148.15px;font-size:14px">M</div>
<div class="a" style="left:874px;top:147px;width:63px;height:1px;background:#e8e6e1"></div>
<div class="a" style="left:874px;top:147px;width:1px;height:16px;background:#e8e6e1"></div>
<div class="a" style="left:937px;top:147px;width:1px;height:16px;background:#808080"></div>
<div class="t" style="filter:url(#c13);left:874px;width:63px;text-align:center;top:148.15px;font-size:14px">N</div>
<div class="a" style="left:938px;top:147px;width:63px;height:1px;background:#e8e6e1"></div>
<div class="a" style="left:938px;top:147px;width:1px;height:16px;background:#e8e6e1"></div>
<div class="a" style="left:1001px;top:147px;width:1px;height:16px;background:#808080"></div>
<div class="t" style="filter:url(#c13);left:938px;width:63px;text-align:center;top:148.15px;font-size:14px">O</div>
<div class="a" style="left:1002px;top:147px;width:63px;height:1px;background:#e8e6e1"></div>
<div class="a" style="left:1002px;top:147px;width:1px;height:16px;background:#e8e6e1"></div>
<div class="a" style="left:1065px;top:147px;width:1px;height:16px;background:#808080"></div>
<div class="t" style="filter:url(#c13);left:1002px;width:63px;text-align:center;top:148.15px;font-size:14px">P</div>
<div class="a" style="left:1066px;top:147px;width:63px;height:1px;background:#e8e6e1"></div>
<div class="a" style="left:1066px;top:147px;width:1px;height:16px;background:#e8e6e1"></div>
<div class="a" style="left:1129px;top:147px;width:1px;height:16px;background:#808080"></div>
<div class="t" style="filter:url(#c13);left:1066px;width:63px;text-align:center;top:148.15px;font-size:14px">Q</div>
<div class="a" style="left:16px;top:147px;width:25px;height:1px;background:#e8e6e1"></div><div class="a" style="left:16px;top:147px;width:1px;height:16px;background:#e8e6e1"></div>
<div class="a" style="left:16px;top:164px;width:25px;height:1px;background:#e8e6e1"></div>
<div class="a" style="left:16px;top:164px;width:1px;height:16px;background:#e8e6e1"></div>
<div class="a" style="left:16px;top:180px;width:25px;height:1px;background:#808080"></div>
<div class="t" style="filter:url(#c13);left:16px;width:25px;text-align:center;top:165.15px;font-size:14px">1</div>
<div class="a" style="left:16px;top:181px;width:25px;height:1px;background:#e8e6e1"></div>
<div class="a" style="left:16px;top:181px;width:1px;height:16px;background:#e8e6e1"></div>
<div class="a" style="left:16px;top:197px;width:25px;height:1px;background:#808080"></div>
<div class="t" style="filter:url(#c13);left:16px;width:25px;text-align:center;top:182.15px;font-size:14px">2</div>
<div class="a" style="left:16px;top:198px;width:25px;height:1px;background:#e8e6e1"></div>
<div class="a" style="left:16px;top:198px;width:1px;height:16px;background:#e8e6e1"></div>
<div class="a" style="left:16px;top:214px;width:25px;height:1px;background:#808080"></div>
<div class="t" style="filter:url(#c13);left:16px;width:25px;text-align:center;top:199.15px;font-size:14px">3</div>
<div class="a" style="left:16px;top:215px;width:25px;height:1px;background:#e8e6e1"></div>
<div class="a" style="left:16px;top:215px;width:1px;height:16px;background:#e8e6e1"></div>
<div class="a" style="left:16px;top:231px;width:25px;height:1px;background:#808080"></div>
<div class="t" style="filter:url(#c13);left:16px;width:25px;text-align:center;top:216.15px;font-size:14px">4</div>
<div class="a" style="left:16px;top:232px;width:25px;height:1px;background:#e8e6e1"></div>
<div class="a" style="left:16px;top:232px;width:1px;height:16px;background:#e8e6e1"></div>
<div class="a" style="left:16px;top:248px;width:25px;height:1px;background:#808080"></div>
<div class="t" style="filter:url(#c13);left:16px;width:25px;text-align:center;top:233.15px;font-size:14px">5</div>
<div class="a" style="left:16px;top:249px;width:25px;height:1px;background:#e8e6e1"></div>
<div class="a" style="left:16px;top:249px;width:1px;height:16px;background:#e8e6e1"></div>
<div class="a" style="left:16px;top:265px;width:25px;height:1px;background:#808080"></div>
<div class="t" style="filter:url(#c13);left:16px;width:25px;text-align:center;top:250.15px;font-size:14px">6</div>
<div class="a" style="left:16px;top:266px;width:25px;height:1px;background:#e8e6e1"></div>
<div class="a" style="left:16px;top:266px;width:1px;height:16px;background:#e8e6e1"></div>
<div class="a" style="left:16px;top:282px;width:25px;height:1px;background:#808080"></div>
<div class="t" style="filter:url(#c13);left:16px;width:25px;text-align:center;top:267.15px;font-size:14px">7</div>
<div class="a" style="left:16px;top:283px;width:25px;height:1px;background:#e8e6e1"></div>
<div class="a" style="left:16px;top:283px;width:1px;height:16px;background:#e8e6e1"></div>
<div class="a" style="left:16px;top:299px;width:25px;height:1px;background:#808080"></div>
<div class="t" style="filter:url(#c13);left:16px;width:25px;text-align:center;top:284.15px;font-size:14px">8</div>
<div class="a" style="left:16px;top:300px;width:25px;height:16px;background:#b6bdd2"></div>
<div class="a" style="left:16px;top:316px;width:26px;height:1px;background:#0a246a"></div>
<div class="a" style="left:41px;top:300px;width:1px;height:17px;background:#0a246a"></div>
<div class="t" style="filter:url(#c13);left:16px;width:25px;text-align:center;top:301.15px;font-size:14px">9</div>
<div class="a" style="left:16px;top:317px;width:25px;height:1px;background:#e8e6e1"></div>
<div class="a" style="left:16px;top:317px;width:1px;height:16px;background:#e8e6e1"></div>
<div class="a" style="left:16px;top:333px;width:25px;height:1px;background:#808080"></div>
<div class="t" style="filter:url(#c13);left:16px;width:25px;text-align:center;top:318.15px;font-size:14px">10</div>
<div class="a" style="left:16px;top:334px;width:25px;height:1px;background:#e8e6e1"></div>
<div class="a" style="left:16px;top:334px;width:1px;height:16px;background:#e8e6e1"></div>
<div class="a" style="left:16px;top:350px;width:25px;height:1px;background:#808080"></div>
<div class="t" style="filter:url(#c13);left:16px;width:25px;text-align:center;top:335.15px;font-size:14px">11</div>
<div class="a" style="left:16px;top:351px;width:25px;height:1px;background:#e8e6e1"></div>
<div class="a" style="left:16px;top:351px;width:1px;height:16px;background:#e8e6e1"></div>
<div class="a" style="left:16px;top:367px;width:25px;height:1px;background:#808080"></div>
<div class="t" style="filter:url(#c13);left:16px;width:25px;text-align:center;top:352.15px;font-size:14px">12</div>
<div class="a" style="left:16px;top:368px;width:25px;height:1px;background:#e8e6e1"></div>
<div class="a" style="left:16px;top:368px;width:1px;height:16px;background:#e8e6e1"></div>
<div class="a" style="left:16px;top:384px;width:25px;height:1px;background:#808080"></div>
<div class="t" style="filter:url(#c13);left:16px;width:25px;text-align:center;top:369.15px;font-size:14px">13</div>
<div class="a" style="left:16px;top:385px;width:25px;height:1px;background:#e8e6e1"></div>
<div class="a" style="left:16px;top:385px;width:1px;height:16px;background:#e8e6e1"></div>
<div class="a" style="left:16px;top:401px;width:25px;height:1px;background:#808080"></div>
<div class="t" style="filter:url(#c13);left:16px;width:25px;text-align:center;top:386.15px;font-size:14px">14</div>
<div class="a" style="left:16px;top:402px;width:25px;height:1px;background:#e8e6e1"></div>
<div class="a" style="left:16px;top:402px;width:1px;height:16px;background:#e8e6e1"></div>
<div class="a" style="left:16px;top:418px;width:25px;height:1px;background:#808080"></div>
<div class="t" style="filter:url(#c13);left:16px;width:25px;text-align:center;top:403.15px;font-size:14px">15</div>
<div class="a" style="left:16px;top:419px;width:25px;height:1px;background:#e8e6e1"></div>
<div class="a" style="left:16px;top:419px;width:1px;height:16px;background:#e8e6e1"></div>
<div class="a" style="left:16px;top:435px;width:25px;height:1px;background:#808080"></div>
<div class="t" style="filter:url(#c13);left:16px;width:25px;text-align:center;top:420.15px;font-size:14px">16</div>
<div class="a" style="left:16px;top:436px;width:25px;height:1px;background:#e8e6e1"></div>
<div class="a" style="left:16px;top:436px;width:1px;height:16px;background:#e8e6e1"></div>
<div class="a" style="left:16px;top:452px;width:25px;height:1px;background:#808080"></div>
<div class="t" style="filter:url(#c13);left:16px;width:25px;text-align:center;top:437.15px;font-size:14px">17</div>
<div class="a" style="left:16px;top:453px;width:25px;height:1px;background:#e8e6e1"></div>
<div class="a" style="left:16px;top:453px;width:1px;height:16px;background:#e8e6e1"></div>
<div class="a" style="left:16px;top:469px;width:25px;height:1px;background:#808080"></div>
<div class="t" style="filter:url(#c13);left:16px;width:25px;text-align:center;top:454.15px;font-size:14px">18</div>
<div class="a" style="left:16px;top:470px;width:25px;height:1px;background:#e8e6e1"></div>
<div class="a" style="left:16px;top:470px;width:1px;height:16px;background:#e8e6e1"></div>
<div class="a" style="left:16px;top:486px;width:25px;height:1px;background:#808080"></div>
<div class="t" style="filter:url(#c13);left:16px;width:25px;text-align:center;top:471.15px;font-size:14px">19</div>
<div class="a" style="left:16px;top:487px;width:25px;height:1px;background:#e8e6e1"></div>
<div class="a" style="left:16px;top:487px;width:1px;height:16px;background:#e8e6e1"></div>
<div class="a" style="left:16px;top:503px;width:25px;height:1px;background:#808080"></div>
<div class="t" style="filter:url(#c13);left:16px;width:25px;text-align:center;top:488.15px;font-size:14px">20</div>
<div class="a" style="left:16px;top:504px;width:25px;height:1px;background:#e8e6e1"></div>
<div class="a" style="left:16px;top:504px;width:1px;height:16px;background:#e8e6e1"></div>
<div class="a" style="left:16px;top:520px;width:25px;height:1px;background:#808080"></div>
<div class="t" style="filter:url(#c13);left:16px;width:25px;text-align:center;top:505.15px;font-size:14px">21</div>
<div class="a" style="left:16px;top:521px;width:25px;height:1px;background:#e8e6e1"></div>
<div class="a" style="left:16px;top:521px;width:1px;height:16px;background:#e8e6e1"></div>
<div class="a" style="left:16px;top:537px;width:25px;height:1px;background:#808080"></div>
<div class="t" style="filter:url(#c13);left:16px;width:25px;text-align:center;top:522.15px;font-size:14px">22</div>
<div class="a" style="left:16px;top:538px;width:25px;height:1px;background:#e8e6e1"></div>
<div class="a" style="left:16px;top:538px;width:1px;height:16px;background:#e8e6e1"></div>
<div class="a" style="left:16px;top:554px;width:25px;height:1px;background:#808080"></div>
<div class="t" style="filter:url(#c13);left:16px;width:25px;text-align:center;top:539.15px;font-size:14px">23</div>
<div class="a" style="left:16px;top:555px;width:25px;height:1px;background:#e8e6e1"></div>
<div class="a" style="left:16px;top:555px;width:1px;height:16px;background:#e8e6e1"></div>
<div class="a" style="left:16px;top:571px;width:25px;height:1px;background:#808080"></div>
<div class="t" style="filter:url(#c13);left:16px;width:25px;text-align:center;top:556.15px;font-size:14px">24</div>
<div class="a" style="left:16px;top:572px;width:25px;height:1px;background:#e8e6e1"></div>
<div class="a" style="left:16px;top:572px;width:1px;height:16px;background:#e8e6e1"></div>
<div class="a" style="left:16px;top:588px;width:25px;height:1px;background:#808080"></div>
<div class="t" style="filter:url(#c13);left:16px;width:25px;text-align:center;top:573.15px;font-size:14px">25</div>
<div class="a" style="left:16px;top:589px;width:25px;height:1px;background:#e8e6e1"></div>
<div class="a" style="left:16px;top:589px;width:1px;height:16px;background:#e8e6e1"></div>
<div class="a" style="left:16px;top:605px;width:25px;height:1px;background:#808080"></div>
<div class="t" style="filter:url(#c13);left:16px;width:25px;text-align:center;top:590.15px;font-size:14px">26</div>
<div class="a" style="left:16px;top:606px;width:25px;height:1px;background:#e8e6e1"></div>
<div class="a" style="left:16px;top:606px;width:1px;height:16px;background:#e8e6e1"></div>
<div class="a" style="left:16px;top:622px;width:25px;height:1px;background:#808080"></div>
<div class="t" style="filter:url(#c13);left:16px;width:25px;text-align:center;top:607.15px;font-size:14px">27</div>
<div class="a" style="left:16px;top:623px;width:25px;height:1px;background:#e8e6e1"></div>
<div class="a" style="left:16px;top:623px;width:1px;height:16px;background:#e8e6e1"></div>
<div class="a" style="left:16px;top:639px;width:25px;height:1px;background:#808080"></div>
<div class="t" style="filter:url(#c13);left:16px;width:25px;text-align:center;top:624.15px;font-size:14px">28</div>
<div class="a" style="left:16px;top:640px;width:25px;height:1px;background:#e8e6e1"></div>
<div class="a" style="left:16px;top:640px;width:1px;height:16px;background:#e8e6e1"></div>
<div class="a" style="left:16px;top:656px;width:25px;height:1px;background:#808080"></div>
<div class="t" style="filter:url(#c13);left:16px;width:25px;text-align:center;top:641.15px;font-size:14px">29</div>
<div class="a" style="left:16px;top:657px;width:25px;height:1px;background:#e8e6e1"></div>
<div class="a" style="left:16px;top:657px;width:1px;height:16px;background:#e8e6e1"></div>
<div class="a" style="left:16px;top:673px;width:25px;height:1px;background:#808080"></div>
<div class="t" style="filter:url(#c13);left:16px;width:25px;text-align:center;top:658.15px;font-size:14px">30</div>
<div class="a" style="left:16px;top:674px;width:25px;height:1px;background:#e8e6e1"></div>
<div class="a" style="left:16px;top:674px;width:1px;height:16px;background:#e8e6e1"></div>
<div class="a" style="left:16px;top:690px;width:25px;height:1px;background:#808080"></div>
<div class="t" style="filter:url(#c13);left:16px;width:25px;text-align:center;top:675.15px;font-size:14px">31</div>
<div class="a" style="left:16px;top:691px;width:25px;height:1px;background:#e8e6e1"></div>
<div class="a" style="left:16px;top:691px;width:1px;height:16px;background:#e8e6e1"></div>
<div class="a" style="left:16px;top:707px;width:25px;height:1px;background:#808080"></div>
<div class="t" style="filter:url(#c13);left:16px;width:25px;text-align:center;top:692.15px;font-size:14px">32</div>
<div class="a" style="left:16px;top:708px;width:25px;height:1px;background:#e8e6e1"></div>
<div class="a" style="left:16px;top:708px;width:1px;height:16px;background:#e8e6e1"></div>
<div class="a" style="left:16px;top:724px;width:25px;height:1px;background:#808080"></div>
<div class="t" style="filter:url(#c13);left:16px;width:25px;text-align:center;top:709.15px;font-size:14px">33</div>
<div class="a" style="left:16px;top:725px;width:25px;height:1px;background:#e8e6e1"></div>
<div class="a" style="left:16px;top:725px;width:1px;height:16px;background:#e8e6e1"></div>
<div class="a" style="left:16px;top:741px;width:25px;height:1px;background:#808080"></div>
<div class="t" style="filter:url(#c13);left:16px;width:25px;text-align:center;top:726.15px;font-size:14px">34</div>
<div class="a" style="left:16px;top:742px;width:25px;height:1px;background:#e8e6e1"></div>
<div class="a" style="left:16px;top:742px;width:1px;height:16px;background:#e8e6e1"></div>
<div class="a" style="left:16px;top:758px;width:25px;height:1px;background:#808080"></div>
<div class="t" style="filter:url(#c13);left:16px;width:25px;text-align:center;top:743.15px;font-size:14px">35</div>
<div class="a" style="left:16px;top:759px;width:25px;height:1px;background:#e8e6e1"></div>
<div class="a" style="left:16px;top:759px;width:1px;height:16px;background:#e8e6e1"></div>
<div class="a" style="left:16px;top:775px;width:25px;height:1px;background:#808080"></div>
<div class="t" style="filter:url(#c13);left:16px;width:25px;text-align:center;top:760.15px;font-size:14px">36</div>
<div class="a" style="left:16px;top:776px;width:25px;height:1px;background:#e8e6e1"></div>
<div class="a" style="left:16px;top:776px;width:1px;height:16px;background:#e8e6e1"></div>
<div class="a" style="left:16px;top:792px;width:25px;height:1px;background:#808080"></div>
<div class="t" style="filter:url(#c13);left:16px;width:25px;text-align:center;top:777.15px;font-size:14px">37</div>
<div class="a" style="left:16px;top:793px;width:25px;height:1px;background:#e8e6e1"></div>
<div class="a" style="left:16px;top:793px;width:1px;height:16px;background:#e8e6e1"></div>
<div class="a" style="left:16px;top:809px;width:25px;height:1px;background:#808080"></div>
<div class="t" style="filter:url(#c13);left:16px;width:25px;text-align:center;top:794.15px;font-size:14px">38</div>
<div class="a" style="left:16px;top:810px;width:25px;height:1px;background:#e8e6e1"></div>
<div class="a" style="left:16px;top:810px;width:1px;height:16px;background:#e8e6e1"></div>
<div class="a" style="left:16px;top:826px;width:25px;height:1px;background:#808080"></div>
<div class="t" style="filter:url(#c13);left:16px;width:25px;text-align:center;top:811.15px;font-size:14px">39</div>
<div class="a" style="left:16px;top:827px;width:25px;height:1px;background:#e8e6e1"></div>
<div class="a" style="left:16px;top:827px;width:1px;height:16px;background:#e8e6e1"></div>
<div class="a" style="left:16px;top:843px;width:25px;height:1px;background:#808080"></div>
<div class="t" style="filter:url(#c13);left:16px;width:25px;text-align:center;top:828.15px;font-size:14px">40</div>
<div class="a" style="left:16px;top:844px;width:25px;height:1px;background:#e8e6e1"></div>
<div class="a" style="left:16px;top:844px;width:1px;height:16px;background:#e8e6e1"></div>
<div class="a" style="left:16px;top:860px;width:25px;height:1px;background:#808080"></div>
<div class="t" style="filter:url(#c13);left:16px;width:25px;text-align:center;top:845.15px;font-size:14px">41</div>
<div class="a" style="left:16px;top:861px;width:25px;height:1px;background:#e8e6e1"></div>
<div class="a" style="left:16px;top:861px;width:1px;height:16px;background:#e8e6e1"></div>
<div class="a" style="left:16px;top:877px;width:25px;height:1px;background:#808080"></div>
<div class="t" style="filter:url(#c13);left:16px;width:25px;text-align:center;top:862.15px;font-size:14px">42</div>
<div class="a" style="left:16px;top:878px;width:25px;height:1px;background:#e8e6e1"></div>
<div class="a" style="left:16px;top:878px;width:1px;height:16px;background:#e8e6e1"></div>
<div class="a" style="left:16px;top:894px;width:25px;height:1px;background:#808080"></div>
<div class="t" style="filter:url(#c13);left:16px;width:25px;text-align:center;top:879.15px;font-size:14px">43</div>
<div class="a" style="left:16px;top:895px;width:25px;height:1px;background:#e8e6e1"></div>
<div class="a" style="left:16px;top:895px;width:1px;height:16px;background:#e8e6e1"></div>
<div class="a" style="left:16px;top:911px;width:25px;height:1px;background:#808080"></div>
<div class="t" style="filter:url(#c13);left:16px;width:25px;text-align:center;top:896.15px;font-size:14px">44</div>
<div class="a" style="left:16px;top:912px;width:25px;height:1px;background:#e8e6e1"></div>
<div class="a" style="left:16px;top:912px;width:1px;height:16px;background:#e8e6e1"></div>
<div class="a" style="left:16px;top:928px;width:25px;height:1px;background:#808080"></div>
<div class="t" style="filter:url(#c13);left:16px;width:25px;text-align:center;top:913.15px;font-size:14px">45</div>
<div class="t" style="filter:url(#c13);left:169px;width:62px;text-align:right;top:199.15px;font-size:14px">112</div>
<div class="t" style="filter:url(#c13);left:233px;width:62px;text-align:right;top:199.15px;font-size:14px">12</div>
<div class="t" style="filter:url(#c13);left:169px;width:62px;text-align:right;top:216.15px;font-size:14px">324</div>
<div class="t" style="filter:url(#c13);left:233px;width:62px;text-align:right;top:216.15px;font-size:14px">32</div>
<div class="t" style="filter:url(#c13);left:169px;width:62px;text-align:right;top:233.15px;font-size:14px">567</div>
<div class="t" style="filter:url(#c13);left:233px;width:62px;text-align:right;top:233.15px;font-size:14px">56</div>
<div class="t" style="filter:url(#c13);left:169px;width:62px;text-align:right;top:250.15px;font-size:14px">678</div>
<div class="t" style="filter:url(#c13);left:233px;width:62px;text-align:right;top:250.15px;font-size:14px">89</div>
<div class="t" style="filter:url(#c13);left:169px;width:62px;text-align:right;top:267.15px;font-size:14px">987</div>
<div class="t" style="filter:url(#c13);left:233px;width:62px;text-align:right;top:267.15px;font-size:14px">47</div>
<div class="t" style="filter:url(#c13);left:169px;width:62px;text-align:right;top:284.15px;font-size:14px">432</div>
<div class="t" style="filter:url(#c13);left:233px;width:62px;text-align:right;top:284.15px;font-size:14px">94</div>
<div class="a" style="left:232px;top:298px;width:67px;height:20px;border:3px solid #000"></div>
<div class="a" style="left:233px;top:299px;width:65px;height:18px;border:1px solid #3a3a3a"></div>
<div class="a" style="left:294px;top:313px;width:7px;height:7px;background:#fff"></div>
<div class="a" style="left:295px;top:314px;width:5px;height:5px;background:#000"></div>
<div class="a" style="left:297px;top:314px;width:1px;height:5px;background:#3a3a3a"></div><div class="a" style="left:295px;top:316px;width:5px;height:1px;background:#3a3a3a"></div>
<div class="a" style="left:16px;top:928px;width:746px;height:1px;background:#808080"></div>
<div class="a" style="left:16px;top:929px;width:1060px;height:16px;background:#d4d0c8"></div>
<svg style="left:19px;top:934px" width="8" height="7" viewBox="0 0 8 7"><rect x="0" y="0" width="2" height="7" fill="#000"/><path d="M7 0v7L2.5 3.5z" fill="#000"/></svg>
<svg style="left:36px;top:934px" width="5" height="7" viewBox="0 0 5 7"><path d="M4 0v7L0.5 3.5z" fill="#000"/></svg>
<svg style="left:51px;top:934px" width="5" height="7" viewBox="0 0 5 7"><path d="M0 0v7l3.5-3.5z" fill="#000"/></svg>
<svg style="left:66px;top:934px" width="8" height="7" viewBox="0 0 8 7"><path d="M0 0v7l4.5-3.5z" fill="#000"/><rect x="5" y="0" width="2" height="7" fill="#000"/></svg>
<div class="a" style="left:75px;top:929px;width:1px;height:15px;background:#404040"></div>
<svg style="left:70px;top:928px" width="160" height="17" viewBox="0 0 160 17">
<path d="M96 0.5L103.5 15H141.5L148.5 0.5z" fill="#d4d0c8"/>
<path d="M96 0.5L103.5 15" stroke="#000" stroke-width="1.1"/><path d="M103.5 15H141" stroke="#808080"/><path d="M141 15L148.5 0.5" stroke="#000" stroke-width="1.1"/>
<path d="M51 0.5L58.5 15H96.5L104 0.5z" fill="#d4d0c8"/>
<path d="M51 0.5L58.5 15" stroke="#000" stroke-width="1.1"/><path d="M58.5 15H96" stroke="#808080"/><path d="M96 15L104 0.5" stroke="#000" stroke-width="1.1"/>
<path d="M6 0.5L13.5 15H51.5L59 0.5z" fill="#fff"/>
<path d="M6 0.5L13.5 15" fill="none" stroke="#000" stroke-width="1.1"/><path d="M13.5 15H51.5" stroke="#808080"/><path d="M51.5 15L59 0.5" fill="none" stroke="#000" stroke-width="1.1"/>
</svg>
<div class="t" style="filter:url(#cb);left:85px;top:931.18px;font-size:11.6px;font-weight:bold;color:#000;">Лист1</div>
<div class="t" style="left:132px;top:931.69px;font-size:11px;font-weight:normal;color:#000;">Лист2</div>
<div class="t" style="left:177px;top:931.69px;font-size:11px;font-weight:normal;color:#000;">Лист3</div>
<div class="a" style="left:762px;top:929px;width:5px;height:15px;box-shadow:inset 1px 1px #fff,inset -1px -1px #808080;background:#d4d0c8"></div>
<div class="a" style="left:766px;top:929px;width:1px;height:15px;background:#000"></div>
<div class="a" style="left:767px;top:929px;width:16px;height:15px;background:#d4d0c8;box-shadow:inset -1px 0 #404040,inset 0 -1px #808080,inset -2px 0 #808080,inset 1px 1px #d4d0c8,inset 2px 2px #fff"></div>
<svg style="left:772px;top:933px" width="5" height="7" viewBox="0 0 5 7"><path d="M4 0v7L0 3.5z" fill="#000"/></svg>
<div class="a" style="left:783px;top:929px;width:400px;height:15px;background:#d4d0c8;box-shadow:inset 0 -1px #808080,inset 1px 1px #d4d0c8,inset 2px 2px #fff"></div>
</div>
<div class="a" style="left:0;top:112px;width:1075px;height:1px;background:#808080"></div>
<div class="a" style="left:1px;top:113px;width:1073px;height:1px;background:#404040"></div>
<div class="a" style="left:0;top:112px;width:1px;height:841px;background:#808080"></div>
<div class="a" style="left:1px;top:113px;width:1px;height:839px;background:#404040"></div>
<div class="a" style="left:0;top:952px;width:1075px;height:1px;background:#fff"></div>
<div class="a" style="left:1px;top:951px;width:1073px;height:1px;background:#d4d0c8"></div>
<div class="a" style="left:1074px;top:112px;width:1px;height:841px;background:#fff"></div>
<div class="a" style="left:1073px;top:113px;width:1px;height:839px;background:#d4d0c8"></div>
<div class="a" style="left:1075px;top:112px;width:205px;height:841px;background:#d4d0c8"></div><div class="a" style="left:1075px;top:953px;width:205px;height:1px;background:#fff"></div>
<div class="a" style="left:1077px;top:114px;width:202px;height:837px;background:#e9e7e3;border-radius:4px 4px 0 0"></div>
<div class="a" style="left:1077px;top:114px;width:202px;height:26px;border-radius:4px 4px 0 0;background:linear-gradient(to bottom,#f4f3f0 0%,#e9e7e2 55%,#d6d2ca 100%)"></div>
<div class="a" style="left:1082px;top:121px;width:2px;height:2px;background:#fff"></div><div class="a" style="left:1081px;top:120px;width:2px;height:2px;background:#8c8c8c"></div><div class="a" style="left:1082px;top:125px;width:2px;height:2px;background:#fff"></div><div class="a" style="left:1081px;top:124px;width:2px;height:2px;background:#8c8c8c"></div><div class="a" style="left:1082px;top:129px;width:2px;height:2px;background:#fff"></div><div class="a" style="left:1081px;top:128px;width:2px;height:2px;background:#8c8c8c"></div><div class="a" style="left:1082px;top:133px;width:2px;height:2px;background:#fff"></div><div class="a" style="left:1081px;top:132px;width:2px;height:2px;background:#8c8c8c"></div>
<div class="t" style="filter:url(#cb);left:1088px;top:122.10px;font-size:11.7px;font-weight:bold;color:#000;">Создание книги</div>
<svg style="left:1251px;top:125px" width="7" height="4" viewBox="0 0 7 4"><path d="M0 0h7L3.5 4z" fill="#000"/></svg>
<svg style="left:1267px;top:125px" width="9" height="7" viewBox="0 0 9 7"><path d="M0.8 0.5l7 6M7.8 0.5l-7 6" stroke="#000" stroke-width="1.8"/></svg>
<div class="a" style="left:1078px;top:140px;width:87px;height:19px;background:#a5a5a5;border-radius:6px 0 8px 0"></div>
<svg style="left:1085px;top:143px" width="14" height="14" viewBox="0 0 14 14"><circle cx="7" cy="7" r="6.5" fill="#c4c2bc" stroke="#b0b0b0" stroke-width="1"/><path d="M2.5 7l4.5-4.5v3h4.5v3H7v3z" fill="#d8d6d0" stroke="#707070" stroke-width="1"/></svg>
<div class="a" style="left:1106px;top:142px;width:1px;height:15px;background:#f0f0f0"></div>
<svg style="left:1114px;top:143px" width="14" height="14" viewBox="0 0 14 14"><circle cx="7" cy="7" r="6.5" fill="#c4c2bc" stroke="#b0b0b0" stroke-width="1"/><path d="M11.5 7L7 2.5v3H2.5v3H7v3z" fill="#d8d6d0" stroke="#707070" stroke-width="1"/></svg>
<div class="a" style="left:1135px;top:142px;width:1px;height:15px;background:#f0f0f0"></div>
<svg style="left:1143px;top:142px" width="15" height="15" viewBox="0 0 15 15"><path d="M1.5 7.5L7.5 1.5l6 6" fill="none" stroke="#d8a020" stroke-width="1.6"/><path d="M3 7l4.5-4.5L12 7v7.5H3z" fill="#fff" stroke="#1a2a5a" stroke-width="1"/><rect x="6.5" y="9" width="3" height="5.5" fill="#f0b820"/><rect x="11" y="1" width="1.5" height="4" fill="#a02020"/></svg>
<div class="t" style="filter:url(#cb);left:1083px;top:167.18px;font-size:11.6px;font-weight:bold;color:#000;">Создание</div>
<div class="a" style="left:1083px;top:179px;width:189px;height:1px;background:#7a7a7a"></div>
<svg style="left:1094px;top:183px" width="14" height="16" viewBox="0 0 14 16"><path d="M1.5 1.5h7l3.5 3.5v9.5h-10.5z" fill="url(#gdoc)" stroke="#9ab0d4"/><path d="M12 5v9.5h-10.5" fill="none" stroke="#2a3f60" stroke-width="1.3"/><path d="M8.5 1.5v3.5h3.5" fill="#fff" stroke="#2a3f60" stroke-width="0.9"/></svg>
<div class="t" style="left:1114px;top:186.43px;font-size:11.3px;font-weight:normal;color:#0000ff;">Чистая книга</div>
<svg style="left:1092px;top:202px" width="17" height="17" viewBox="0 0 17 17"><path d="M4.5 1.5h8l3 3v11h-11z" fill="url(#gdoc)" stroke="#8aa8d8"/><path d="M15.5 4.5v11h-10" fill="none" stroke="#2a3f60" stroke-width="1.2"/><path d="M12.5 1.5v3h3" fill="#fff" stroke="#2a3f60" stroke-width="0.9"/><path d="M11 7.5h2M11 9.5h2M11 11.5h2" stroke="#8aa8d8"/><path d="M4 0.5v7M0.5 4h7M1.5 1.5l5 5M6.5 1.5l-5 5" stroke="#f0c020" stroke-width="1.2"/><rect x="1.5" y="6.5" width="9" height="9" fill="#fff" stroke="#2a7a2a" stroke-width="1.3"/><path d="M3 8.5l6 5M9 8.5l-6 5" stroke="#2a8a2a" stroke-width="2"/></svg>
<div class="t" style="left:1114px;top:205.69px;font-size:11px;font-weight:normal;color:#0000ff;">Из имеющейся книги...</div>
<div class="t" style="filter:url(#cb);left:1083px;top:227.18px;font-size:11.6px;font-weight:bold;color:#000;">Шаблоны</div>
<div class="a" style="left:1083px;top:239px;width:189px;height:1px;background:#7a7a7a"></div>
<div class="t" style="left:1092px;top:242.69px;font-size:11px;font-weight:normal;color:#000;">Поиск в сети:</div>
<div class="a" style="left:1093px;top:255px;width:91px;height:20px;background:#fff;border:1px solid #7f7f7f"></div>
<div class="a" style="left:1193px;top:254px;width:79px;height:23px;background:#d4d0c8;border:1px solid #9a9a9a"></div>
<div class="t" style="left:1216px;top:260.69px;font-size:11px;font-weight:normal;color:#8c8c8c;">Найти</div>
<svg style="left:1092px;top:278px" width="17" height="18" viewBox="0 0 17 18"><circle cx="10" cy="11" r="5.5" fill="url(#gglobe)"/><path d="M7 8c2 1 2.5 3 1 5.5M11 6.5c1 2 3 2 4.5 3.5M10 16c1-2 3-2 4-4" stroke="#30a040" stroke-width="1.8" fill="none"/><rect x="1.5" y="1.5" width="4" height="4" fill="#fff" stroke="#e01010" stroke-width="1.5"/><rect x="7" y="2" width="3" height="3" fill="#fff" stroke="#1030c0" stroke-width="1.2"/><rect x="2" y="7" width="3" height="3" fill="#fff" stroke="#f0a010" stroke-width="1.2"/><rect x="7" y="7" width="3" height="3" fill="#fff" stroke="#20a020" stroke-width="1.2"/></svg>
<div class="t" style="left:1114px;top:281.69px;font-size:11px;font-weight:normal;color:#0000ff;">Шаблоны на узле Office Online</div>
<svg style="left:1092px;top:298px" width="17" height="17" viewBox="0 0 17 17"><path d="M2 15.5h13" stroke="#6a7a9a" stroke-width="1.5"/><rect x="4.5" y="1.5" width="11" height="14" fill="#dde6f4" stroke="#405070"/><rect x="5" y="2" width="10" height="2" fill="#f0a040"/><path d="M15.5 2v14" stroke="#101820" stroke-width="1.5"/><path d="M11 6.5h3M11 8.5h3M11 10.5h3" stroke="#8aa0c0"/><rect x="1.5" y="2.5" width="9" height="9" fill="#fff" stroke="#2a7a2a" stroke-width="1.3"/><path d="M3 4.5l6 5M9 4.5l-6 5" stroke="#2a8a2a" stroke-width="2"/></svg>
<div class="t" style="left:1114px;top:301.69px;font-size:11px;font-weight:normal;color:#0000ff;">На моем компьютере...</div>
<svg style="left:1092px;top:319px" width="17" height="15" viewBox="0 0 17 15"><path d="M1.5 2.5h5l1 1.5h7.5v9.5h-13.5z" fill="#f0c850" stroke="#7a6a40"/><path d="M1.5 13.5h13.5" stroke="#201800" stroke-width="1.2"/><circle cx="8" cy="8.5" r="4.3" fill="url(#gglobe)"/><path d="M6 5.5c1 1 1.5 3 0 5M9 4.5c1 1.5 2 2 3.5 2.5M8 12.5c1-1.5 2.5-2 3.5-3" stroke="#30a040" stroke-width="1.5" fill="none"/></svg>
<div class="t" style="left:1114px;top:321.69px;font-size:11px;font-weight:normal;color:#0000ff;">На моих веб-узлах...</div>
<div class="a" style="left:0;top:954px;width:1280px;height:18px;background:#d4d0c8"></div>
<div class="t" style="left:5px;top:958.69px;font-size:11px;font-weight:normal;color:#000;letter-spacing:0.6px">Готово</div>
<div class="a" style="left:954px;top:956px;width:34px;height:15px;border:1px solid #e2dfd9"></div>
<div class="a" style="left:989px;top:956px;width:112px;height:15px;border:1px solid #e2dfd9"></div>
<div class="a" style="left:1102px;top:956px;width:26px;height:15px;border:1px solid #e2dfd9"></div>
<div class="a" style="left:1129px;top:956px;width:30px;height:15px;border:1px solid #e2dfd9"></div>
<div class="a" style="left:1160px;top:956px;width:26px;height:15px;border:1px solid #e2dfd9"></div>
<div class="a" style="left:1187px;top:956px;width:29px;height:15px;border:1px solid #e2dfd9"></div>
<div class="a" style="left:1217px;top:956px;width:26px;height:15px;border:1px solid #e2dfd9"></div>
<div class="a" style="left:1244px;top:956px;width:34px;height:15px;border:1px solid #e2dfd9"></div>
<div class="t" style="left:1162px;top:958.69px;font-size:11px;font-weight:normal;color:#000;transform:scaleX(0.88);transform-origin:0 0">NUM</div>
<div class="a" style="left:0;top:972px;width:1280px;height:52px;background:#d4d0c8;box-shadow:inset 0 1px #d4d0c8,inset 0 2px #fff"></div>
<div class="a raised" style="left:2px;top:976px;width:51px;height:22px;box-shadow:inset -1px -1px #404040,inset 1px 1px #fff,inset -2px -2px #808080"></div>
<svg style="left:4px;top:978px" width="16" height="16" viewBox="0 0 16 16"><path d="M3 1.5c1.5-1 3.5-1 5.5 0.2l-1 5.3c-2-1-4-1-5.5 0z" fill="#f05a1a"/><path d="M9.5 1.8c2 1 4 1 5.5 0l-1 5.5c-1.5 1-3.5 1-5.5 0z" fill="#5cb83c"/><path d="M1.8 8c1.5-1 3.5-1 5.5 0l-1 5.5c-2-1-4-1-5.5 0z" fill="#2a78e8"/><path d="M8.3 8.2c2 1 4 1 5.5 0l-1 5.5c-1.5 1-3.5 1-5.5 0z" fill="#f8c018"/></svg>
<div class="t" style="filter:url(#cb);left:22px;top:981.18px;font-size:11.6px;font-weight:bold;color:#000;">Пуск</div>
<svg style="left:62px;top:980px" width="16" height="16" viewBox="0 0 16 16"><path d="M13 10.5A5.5 5.5 0 1 1 13.3 7H5" fill="none" stroke="#1a7ee0" stroke-width="2.8"/><path d="M3.5 8h10" stroke="#1a7ee0" stroke-width="1.6"/><path d="M1.5 15.5c-2.5-2.5 2-11 13-14.5" fill="none" stroke="#f0a818" stroke-width="1.8"/><path d="M14.5 1c1.5 1 0 3.5-1.5 5" fill="none" stroke="#f0a818" stroke-width="1.4"/></svg>
<svg style="left:84px;top:980px" width="16" height="16" viewBox="0 0 16 16"><defs><linearGradient id="gdesk" x1="0" y1="0" x2="1" y2="1"><stop offset="0" stop-color="#2a58c0"/><stop offset="1" stop-color="#6aa0f0"/></linearGradient></defs><rect x="0.5" y="1.5" width="15" height="13" fill="url(#gdesk)" stroke="#a8b8d0"/><rect x="1" y="11" width="14" height="3" fill="#303030"/><rect x="1.5" y="10" width="3" height="3" fill="#e04020"/><rect x="2.5" y="11" width="1.5" height="1.5" fill="#40c040"/></svg>
<svg style="left:108px;top:980px" width="16" height="16" viewBox="0 0 16 16"><rect x="0.5" y="0.5" width="14" height="15" fill="#e8eef6" stroke="#8a9ab0"/><rect x="2" y="2" width="11" height="3" fill="#a8c8f0"/><path d="M3 7.5h2M6.5 7.5h2M10 7.5h2M3 10h2M6.5 10h2M10 10h2M3 12.5h2M6.5 12.5h2M10 12.5h2" stroke="#9aa" stroke-width="1.4"/></svg>
<svg style="left:130px;top:980px" width="16" height="16" viewBox="0 0 16 16"><rect x="0.75" y="0.75" width="14.5" height="14.5" fill="#e4ecfa" stroke="#2a5ab8" stroke-width="1.5"/><text x="1" y="12.5" font-family="Liberation Serif" font-style="italic" font-weight="bold" font-size="12" fill="#3a6ad0">W</text></svg>
<svg style="left:153px;top:980px" width="16" height="16" viewBox="0 0 16 16"><rect x="0.75" y="0.75" width="14.5" height="14.5" fill="#eaf4e6" stroke="#2a7a2a" stroke-width="1.5"/><path d="M4 4l8 8M12 4l-8 8" stroke="#2a8a2a" stroke-width="2.6"/></svg>
<svg style="left:176px;top:980px" width="16" height="16" viewBox="0 0 16 16"><rect x="0.75" y="0.75" width="14.5" height="14.5" fill="#f8e8f4" stroke="#a03078" stroke-width="1.5"/><circle cx="10" cy="5.5" r="2.5" fill="#d070b0" stroke="#a03080" stroke-width="1"/><path d="M8.5 7L3.5 12.5" stroke="#c060a0" stroke-width="2.2"/></svg>
<svg style="left:199px;top:980px" width="16" height="16" viewBox="0 0 16 16"><rect x="0.75" y="0.75" width="14.5" height="14.5" fill="#fbe8dc" stroke="#d04a10" stroke-width="1.5"/><circle cx="7" cy="8.5" r="4" fill="#f08040" stroke="#c04010" stroke-width="1.2"/><path d="M7 8.5V4.5A4 4 0 0 1 11 8.5z" fill="#fff"/><path d="M12.5 5.5v1M12.5 8v1M12.5 10.5v1" stroke="#c04010"/></svg>
<svg style="left:222px;top:980px" width="16" height="16" viewBox="0 0 16 16"><circle cx="8" cy="8" r="7" fill="#2a5ab8" stroke="#101a50" stroke-width="1.2"/><circle cx="8" cy="8" r="4.5" fill="#8ac8f8"/><path d="M6.5 5l5 3-5 3z" fill="#000"/></svg>
<div class="a raised" style="left:58px;top:1000px;width:161px;height:22px;box-shadow:inset -1px -1px #404040,inset 1px 1px #fff,inset -2px -2px #808080"></div><svg style="left:63px;top:1003px" width="13" height="16" viewBox="0 0 13 16"><path d="M0.5 2.5l5-2v13l-5 2z" fill="#e8c860" stroke="#a08030"/><path d="M5.5 0.5h6v13h-6z" fill="#f8e8a0" stroke="#a08030"/><path d="M11 8h1v3h-1z" fill="#3080d0"/></svg><div class="t" style="left:82px;top:1005.69px;font-size:11px;font-weight:normal;color:#000;">C:\Documents and Settin...</div>
<div class="a raised" style="left:221px;top:1000px;width:160px;height:22px;box-shadow:inset -1px -1px #404040,inset 1px 1px #fff,inset -2px -2px #808080"></div><svg style="left:226px;top:1003px" width="16" height="16" viewBox="0 0 16 16"><path d="M4.5 1.5h8l3 3v11h-11z" fill="#eef2fa" stroke="#5a7ab0"/><path d="M8 7h6M8 9.5h6M8 12h6" stroke="#8aa"/><rect x="0.5" y="1.5" width="9" height="8" fill="#fff" stroke="#2a5ab8"/><text x="1" y="8.5" font-family="Liberation Serif" font-weight="bold" font-style="italic" font-size="8" fill="#2a5ab8">W</text></svg><div class="t" style="left:245px;top:1005.69px;font-size:11px;font-weight:normal;color:#000;">Microsoft Excel.doc - Mic...</div>
<div class="a raised" style="left:384px;top:1000px;width:160px;height:22px;box-shadow:inset -1px -1px #404040,inset 1px 1px #fff,inset -2px -2px #808080"></div><svg style="left:389px;top:1003px" width="16" height="16" viewBox="0 0 16 16"><path d="M4.5 1.5h8l3 3v11h-11z" fill="#eef2fa" stroke="#5a7ab0"/><path d="M8 7h6M8 9.5h6M8 12h6" stroke="#8aa"/><rect x="0.5" y="1.5" width="9" height="8" fill="#fff" stroke="#2a5ab8"/><text x="1" y="8.5" font-family="Liberation Serif" font-weight="bold" font-style="italic" font-size="8" fill="#2a5ab8">W</text></svg><div class="t" style="left:408px;top:1005.69px;font-size:11px;font-weight:normal;color:#000;letter-spacing:0.25px">Відкрите заняття табл....</div>
<div class="a" style="left:547px;top:1000px;width:160px;height:22px;background-color:#e8e6e2;background-image:repeating-conic-gradient(#fff 0 25%,#d4d0c8 0 50%);background-size:2px 2px;box-shadow:inset 1px 1px #404040,inset -1px -1px #fff,inset 2px 2px #808080"></div><svg style="left:552px;top:1004px" width="16" height="16" viewBox="0 0 16 16"><path d="M4.5 1.5h8l3 3v11h-11z" fill="#eef2fa" stroke="#5a7ab0"/><path d="M8 7h6M8 9.5h6M8 12h6" stroke="#8aa"/><rect x="0.5" y="1.5" width="9" height="8" fill="#e0f0d8" stroke="#2a7a2a"/><path d="M2 3l6 5M8 3l-6 5" stroke="#1f8a1f" stroke-width="1.6"/></svg><div class="t" style="filter:url(#cb);left:571px;top:1005.18px;font-size:11.6px;font-weight:bold;color:#000;">Книга1</div>
<div class="a" style="left:1141px;top:980px;width:12px;height:16px;background:#0a246a;overflow:hidden"><div class="t" style="left:0;top:3px;font-size:11px;color:#fff">EN</div></div>
<div class="a" style="left:1157px;top:976px;width:121px;height:46px;box-shadow:inset 1px 1px #808080,inset -1px -1px #fff"></div>
<svg style="left:1160px;top:982px" width="16" height="16" viewBox="0 0 16 16"><rect x="5.5" y="1.5" width="10" height="8" fill="#b87830" stroke="#8a8a8a"/><path d="M6 2h9v3H6z" fill="#e0a060" opacity="0.6"/><rect x="0.5" y="4.5" width="10" height="8" fill="#c81818" stroke="#8a8a8a"/><path d="M1 5h9v3H1z" fill="#f06060" opacity="0.5"/><path d="M3 14.5h5M5.5 12.5v2" stroke="#606060"/></svg>
<svg style="left:1178px;top:981px" width="17" height="17" viewBox="0 0 17 17"><path d="M0.5 5.5h3l5-5v15l-5-5h-3z" fill="#f4f6fc" stroke="#606468"/><rect x="1" y="6" width="1.5" height="4" fill="#4050c0"/><path d="M10.5 6c1 1 1 3 0 4" fill="none" stroke="#307040" stroke-width="2"/><path d="M12.5 4c1.8 2 1.8 6 0 8" fill="none" stroke="#307040" stroke-width="2"/><path d="M14.5 2c2.5 3 2.5 9 0 12" fill="none" stroke="#307040" stroke-width="2"/><path d="M10.5 6c1 1 1 3 0 4M12.5 4c1.8 2 1.8 6 0 8M14.5 2c2.5 3 2.5 9 0 12" fill="none" stroke="#a8f0b8" stroke-width="0.6"/></svg>
<svg style="left:1196px;top:982px" width="15" height="15" viewBox="0 0 15 15"><path d="M0 0h4v6.5L10 0h4.5L1.5 14H0z" fill="#ff0000" stroke="#fff" stroke-width="0.8"/><path d="M8 8.5h3v2l3 3v-5h-2z" fill="#000"/><path d="M8.5 9l5 4.5" stroke="#000" stroke-width="2.2"/><path d="M14 9v5H9z" fill="#000"/></svg>
<svg style="left:1160px;top:1003px" width="15" height="10" viewBox="0 0 15 10"><rect x="0" y="0" width="15" height="10" fill="#fae8e0"/><path d="M0 0.5h15M0 2.5h15M0 4.5h15M0 6.5h15M0 8.5h15" stroke="#d83838" stroke-width="1"/><rect x="0" y="0" width="6" height="5" fill="#4050a8"/><path d="M1 1.5h4M1 3h4" stroke="#8090d0" stroke-width="0.5"/></svg>
<svg style="left:1178px;top:1000px" width="16" height="16" viewBox="0 0 16 16"><rect x="0" y="0" width="16" height="16" fill="#108a10"/><circle cx="8" cy="8" r="7" fill="#f0f0f0"/><path d="M1 8h14" stroke="#c0c0c0" stroke-width="2"/><path d="M10 0.5L5.5 8.5H9.5L6 15.5" stroke="#108a10" stroke-width="2.8" fill="none"/></svg>
<div class="t" style="left:1213px;width:61px;text-align:center;top:984.69px;font-size:11px">23:07</div>
<div class="t" style="left:1218px;width:51px;text-align:center;top:1003.69px;font-size:11px">понеділок</div>
<div class="a" style="left:312px;top:273px;width:441px;height:379px;background:#d4d0c8;box-shadow:inset -1px -1px #404040,inset -2px -2px #808080,inset 1px 1px #d4d0c8,inset 2px 2px #fff"></div>
<div class="a" style="left:315px;top:276px;width:435px;height:18px;background:linear-gradient(to right,#0a246a,#a6caf0)"></div>
<div class="t" style="filter:url(#cb);left:317px;top:278.84px;font-size:12px;font-weight:bold;color:#fff;">Формат ячеек</div>
<div class="a raised" style="left:714px;top:278px;width:16px;height:14px"><div class="t" style="filter:url(#cb);left:4px;top:1px;font-size:11px;font-weight:bold">?</div></div>
<div class="a raised" style="left:732px;top:278px;width:16px;height:14px"><svg style="left:4px;top:3px" width="8" height="7" viewBox="0 0 8 7"><path d="M0.5 0.5l7 6M7.5 0.5l-7 6" stroke="#000" stroke-width="1.6"/></svg></div>
<div class="a" style="left:321px;top:324px;width:423px;height:285px;box-shadow:inset 1px 1px #fff,inset -1px -1px #404040,inset -2px -2px #808080"></div>
<div class="a" style="left:323px;top:305px;width:51px;height:19px;background:#d4d0c8;border-radius:2px 2px 0 0;box-shadow:inset 1px 1px #fff,inset -1px 0 #404040,inset -2px 0 #808080"></div>
<div class="t" style="left:323px;width:50px;text-align:center;top:310.69px;font-size:11px">Число</div>
<div class="a" style="left:375px;top:305px;width:92px;height:19px;background:#d4d0c8;border-radius:2px 2px 0 0;box-shadow:inset 1px 1px #fff,inset -1px 0 #404040,inset -2px 0 #808080"></div>
<div class="t" style="left:375px;width:91px;text-align:center;top:310.69px;font-size:11px">Выравнивание</div>
<div class="a" style="left:467px;top:305px;width:54px;height:19px;background:#d4d0c8;border-radius:2px 2px 0 0;box-shadow:inset 1px 1px #fff,inset -1px 0 #404040,inset -2px 0 #808080"></div>
<div class="t" style="left:467px;width:53px;text-align:center;top:310.69px;font-size:11px">Шрифт</div>
<div class="a" style="left:522px;top:305px;width:58px;height:19px;background:#d4d0c8;border-radius:2px 2px 0 0;box-shadow:inset 1px 1px #fff,inset -1px 0 #404040,inset -2px 0 #808080"></div>
<div class="t" style="left:522px;width:57px;text-align:center;top:310.69px;font-size:11px">Граница</div>
<div class="a" style="left:581px;top:305px;width:53px;height:19px;background:#d4d0c8;border-radius:2px 2px 0 0;box-shadow:inset 1px 1px #fff,inset -1px 0 #404040,inset -2px 0 #808080"></div>
<div class="t" style="left:581px;width:52px;text-align:center;top:310.69px;font-size:11px">Вид</div>
<div class="a" style="left:634px;top:303px;width:59px;height:22px;background:#d4d0c8;border-radius:2px 2px 0 0;box-shadow:inset 1px 1px #fff,inset -1px 0 #404040,inset -2px 0 #808080"></div>
<div class="a" style="left:635px;top:324px;width:56px;height:1px;background:#d4d0c8"></div>
<div class="t" style="left:634px;width:58px;text-align:center;top:309.69px;font-size:11px">Защита</div>
<div class="a" style="left:638px;top:307px;width:50px;height:16px;border:1px dotted #000"></div>
<div class="a" style="left:329px;top:345px;width:13px;height:13px;background:#fff;box-shadow:inset 1px 1px #808080,inset -1px -1px #fff,inset 2px 2px #404040,inset -2px -2px #d4d0c8"></div><svg style="left:332px;top:348px" width="8" height="8" viewBox="0 0 8 8"><path d="M0.8 3l2.2 2.8 4.3-5" fill="none" stroke="#000" stroke-width="2.3"/></svg>
<div class="t" style="left:345px;top:346.69px;font-size:11px;font-weight:normal;color:#000;">За<span class="u">щ</span>ищаемая ячейка</div>
<div class="a" style="left:329px;top:365px;width:13px;height:13px;background:#fff;box-shadow:inset 1px 1px #808080,inset -1px -1px #fff,inset 2px 2px #404040,inset -2px -2px #d4d0c8"></div>
<div class="t" style="left:345px;top:366.69px;font-size:11px;font-weight:normal;color:#000;">С<span class="u">к</span>рыть формулы</div>
<div class="t" style="left:328px;top:416.69px;font-size:11px;font-weight:normal;color:#000;letter-spacing:0.06px">Защита ячеек или скрытие формул действуют только после</div>
<div class="t" style="left:328px;top:429.69px;font-size:11px;font-weight:normal;color:#000;letter-spacing:0.06px">защиты листа. Для защиты листа выберите команду "Защита" в</div>
<div class="t" style="left:328px;top:442.69px;font-size:11px;font-weight:normal;color:#000;letter-spacing:0.06px">меню "Сервис", затем выполните команду "Защитить лист". При</div>
<div class="t" style="left:328px;top:455.69px;font-size:11px;font-weight:normal;color:#000;letter-spacing:0.06px">этом можно установить пароль.</div>
<div class="a" style="left:577px;top:618px;width:74px;height:22px;border:1px solid #000;box-shadow:inset -1px -1px #404040,inset 1px 1px #fff,inset -2px -2px #808080;background:#d4d0c8"></div>
<div class="t" style="left:577px;width:74px;text-align:center;top:623.69px;font-size:11px">OK</div>
<div class="a raised" style="left:661px;top:618px;width:74px;height:22px"></div>
<div class="t" style="left:661px;width:74px;text-align:center;top:623.69px;font-size:11px">Отмена</div></body></html>
